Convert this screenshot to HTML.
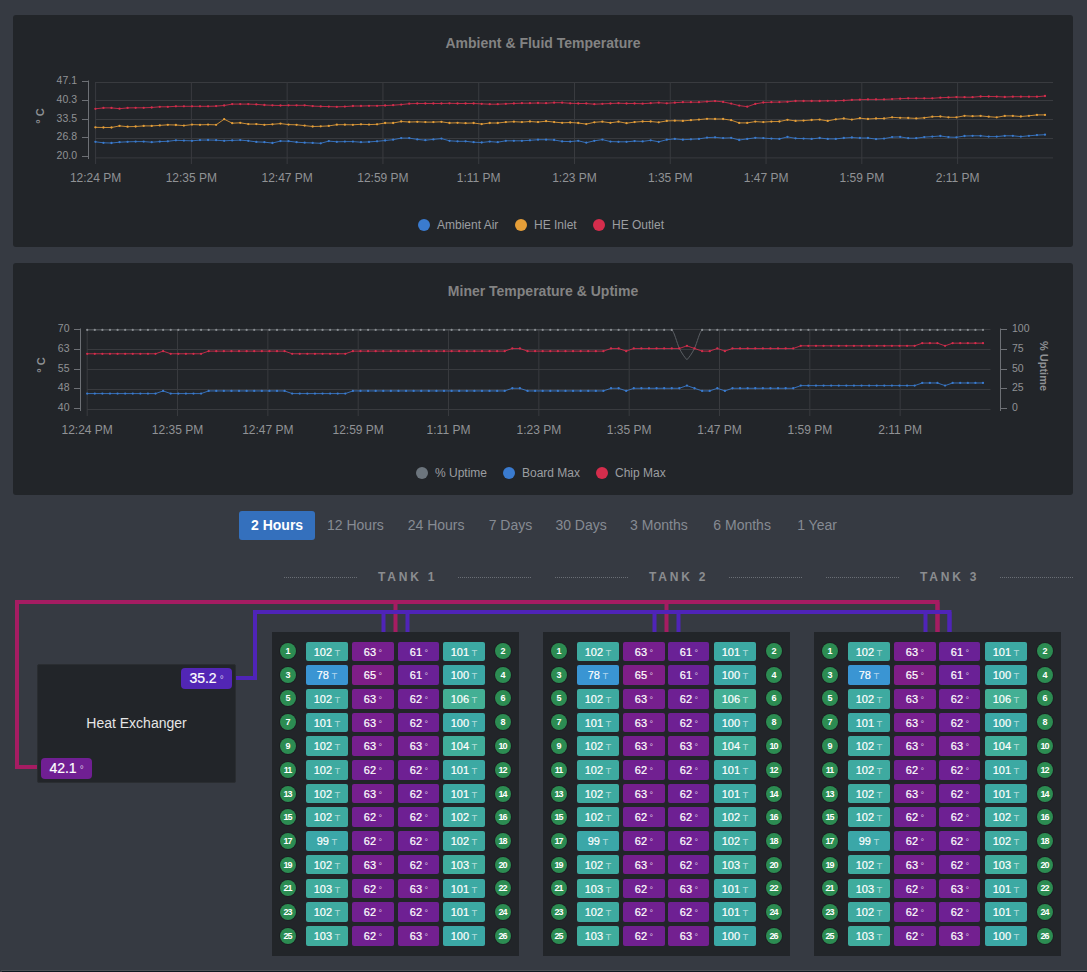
<!DOCTYPE html><html><head><meta charset="utf-8"><style>
html,body{margin:0;padding:0;}
body{width:1087px;height:972px;overflow:hidden;background:#363a42;position:relative;font-family:"Liberation Sans",sans-serif;}
.panel{position:absolute;background:#222529;border-radius:3px;}
.abs{position:absolute;}
svg text{font-family:"Liberation Sans",sans-serif;}
.title{position:absolute;left:13px;width:1060px;text-align:center;font-size:14px;font-weight:bold;color:#838383;}
.leg{position:absolute;font-size:12px;color:#9c9ea1;white-space:nowrap;}
.dot{position:absolute;width:12px;height:12px;border-radius:50%;}
.btn{position:absolute;top:511px;height:29px;line-height:29px;font-size:14px;color:#868b93;white-space:nowrap;}
.btn.act{background:#3470bd;color:#fff;font-weight:bold;border-radius:3px;padding:0 12px;}
.hdr{position:absolute;top:570px;font-size:12px;font-weight:bold;letter-spacing:2.8px;color:#8b8d90;white-space:nowrap;}
.dots{position:absolute;top:577px;height:0;border-top:1px dotted #6a6e75;}
.tank{position:absolute;top:632px;width:247px;height:324px;background:#222529;}
.c{position:absolute;width:42px;height:20px;border-radius:2px;}
.ct{position:absolute;width:42px;height:20px;color:#fff;font-size:11px;-webkit-text-stroke:0.2px #fff;line-height:20px;text-align:center;white-space:nowrap;}
.ct .s{font-size:9.5px;color:rgba(255,255,255,0.6);-webkit-text-stroke:0;}
.ct .d{font-size:9px;color:rgba(255,255,255,0.75);-webkit-text-stroke:0;}
.n{position:absolute;width:16px;height:16px;border-radius:50%;background:#2c8c52;color:#fff;font-size:9px;font-weight:bold;line-height:16px;text-align:center;letter-spacing:-1.2px;text-indent:-1.2px;box-shadow:0 0 0 1px #1c1f22;}
.badge{position:absolute;height:21px;line-height:21px;border-radius:4px;color:#fff;font-size:14px;text-align:center;-webkit-text-stroke:0.2px #fff;}
.badge .d{font-size:10px;color:rgba(255,255,255,0.7);margin-left:3px;-webkit-text-stroke:0;}
</style></head><body>

<div class="panel" style="left:13px;top:15px;width:1060px;height:232px;"></div>
<div class="panel" style="left:13px;top:263px;width:1060px;height:232px;"></div>
<div class="title" style="top:35px;">Ambient &amp; Fluid Temperature</div>
<div class="title" style="top:283px;">Miner Temperature &amp; Uptime</div>
<svg class="abs" style="left:0;top:0" width="1087" height="972"><line x1="95" x2="1053" y1="82.5" y2="82.5" stroke="#393b3f" stroke-width="1"/><line x1="95" x2="1053" y1="100.5" y2="100.5" stroke="#393b3f" stroke-width="1"/><line x1="95" x2="1053" y1="119.5" y2="119.5" stroke="#393b3f" stroke-width="1"/><line x1="95" x2="1053" y1="138.5" y2="138.5" stroke="#393b3f" stroke-width="1"/><line x1="95" x2="1053" y1="157.9" y2="157.9" stroke="#393b3f" stroke-width="1"/><line x1="95.60" x2="95.60" y1="82" y2="164" stroke="#393b3f" stroke-width="1"/><line x1="191.38" x2="191.38" y1="82" y2="164" stroke="#393b3f" stroke-width="1"/><line x1="287.16" x2="287.16" y1="82" y2="164" stroke="#393b3f" stroke-width="1"/><line x1="382.94" x2="382.94" y1="82" y2="164" stroke="#393b3f" stroke-width="1"/><line x1="478.72" x2="478.72" y1="82" y2="164" stroke="#393b3f" stroke-width="1"/><line x1="574.50" x2="574.50" y1="82" y2="164" stroke="#393b3f" stroke-width="1"/><line x1="670.28" x2="670.28" y1="82" y2="164" stroke="#393b3f" stroke-width="1"/><line x1="766.06" x2="766.06" y1="82" y2="164" stroke="#393b3f" stroke-width="1"/><line x1="861.84" x2="861.84" y1="82" y2="164" stroke="#393b3f" stroke-width="1"/><line x1="957.62" x2="957.62" y1="82" y2="164" stroke="#393b3f" stroke-width="1"/><line x1="88.5" x2="88.5" y1="80.5" y2="159" stroke="#6d7075" stroke-width="1"/><line x1="82" x2="88.5" y1="81.5" y2="81.5" stroke="#6d7075" stroke-width="1"/><text x="77" y="83.5" font-size="10.5" fill="#909295" text-anchor="end">47.1</text><line x1="82" x2="88.5" y1="100.5" y2="100.5" stroke="#6d7075" stroke-width="1"/><text x="77" y="102.5" font-size="10.5" fill="#909295" text-anchor="end">40.3</text><line x1="82" x2="88.5" y1="119.5" y2="119.5" stroke="#6d7075" stroke-width="1"/><text x="77" y="121.5" font-size="10.5" fill="#909295" text-anchor="end">33.5</text><line x1="82" x2="88.5" y1="137.5" y2="137.5" stroke="#6d7075" stroke-width="1"/><text x="77" y="139.5" font-size="10.5" fill="#909295" text-anchor="end">26.8</text><line x1="82" x2="88.5" y1="156.5" y2="156.5" stroke="#6d7075" stroke-width="1"/><text x="77" y="158.5" font-size="10.5" fill="#909295" text-anchor="end">20.0</text><text x="95.6" y="182" font-size="12" fill="#909295" text-anchor="middle">12:24 PM</text><text x="191.38" y="182" font-size="12" fill="#909295" text-anchor="middle">12:35 PM</text><text x="287.15999999999997" y="182" font-size="12" fill="#909295" text-anchor="middle">12:47 PM</text><text x="382.94000000000005" y="182" font-size="12" fill="#909295" text-anchor="middle">12:59 PM</text><text x="478.72" y="182" font-size="12" fill="#909295" text-anchor="middle">1:11 PM</text><text x="574.5" y="182" font-size="12" fill="#909295" text-anchor="middle">1:23 PM</text><text x="670.2800000000001" y="182" font-size="12" fill="#909295" text-anchor="middle">1:35 PM</text><text x="766.0600000000001" y="182" font-size="12" fill="#909295" text-anchor="middle">1:47 PM</text><text x="861.84" y="182" font-size="12" fill="#909295" text-anchor="middle">1:59 PM</text><text x="957.62" y="182" font-size="12" fill="#909295" text-anchor="middle">2:11 PM</text><text transform="translate(44,116) rotate(-90)" font-size="11" font-weight="bold" fill="#909295" text-anchor="middle">° C</text><g fill="#3a7bcf"><polyline fill="none" stroke="#3a7bcf" stroke-width="1.0" stroke-opacity="0.85" points="95.40,141.80 103.45,142.80 111.49,143.00 119.54,142.20 127.59,141.80 135.64,141.60 143.68,141.60 151.73,142.20 159.78,141.60 167.83,141.30 175.87,140.30 183.92,140.60 191.97,140.80 200.02,140.10 208.06,140.00 216.11,140.20 224.16,140.80 232.21,140.40 240.25,140.10 248.30,140.80 256.35,141.90 264.40,142.20 272.44,143.00 280.49,141.10 288.54,141.20 296.59,142.20 304.63,142.70 312.68,142.90 320.73,143.30 328.78,141.10 336.82,141.80 344.87,141.60 352.92,141.60 360.97,142.20 369.01,141.90 377.06,141.30 385.11,140.50 393.16,139.70 401.20,138.10 409.25,138.10 417.30,139.40 425.35,140.20 433.39,139.40 441.44,138.60 449.49,140.80 457.54,141.30 465.58,141.30 473.63,142.20 481.68,142.50 489.73,141.60 497.77,142.20 505.82,140.80 513.87,140.80 521.92,140.80 529.96,140.30 538.01,139.70 546.06,139.70 554.11,140.00 562.15,141.40 570.20,141.60 578.25,140.80 586.29,142.70 594.34,140.80 602.39,139.60 610.44,141.60 618.48,141.80 626.53,141.80 634.58,141.10 642.63,141.40 650.67,140.30 658.72,141.80 666.77,139.70 674.82,138.90 682.86,139.70 690.91,139.30 698.96,138.90 707.01,137.60 715.05,137.30 723.10,138.10 731.15,137.80 739.20,140.00 747.24,138.90 755.29,137.80 763.34,138.10 771.39,138.60 779.43,138.90 787.48,136.90 795.53,138.35 803.58,138.60 811.62,138.90 819.67,138.00 827.72,138.90 835.77,138.90 843.81,138.00 851.86,137.50 859.91,138.00 867.96,138.00 876.00,139.10 884.05,138.60 892.10,137.10 900.15,136.90 908.19,138.20 916.24,138.20 924.29,137.10 932.34,136.60 940.38,136.00 948.43,137.10 956.48,137.30 964.53,136.00 972.57,135.80 980.62,135.80 988.67,136.60 996.72,136.60 1004.76,135.80 1012.81,135.80 1020.86,136.60 1028.91,135.80 1036.95,135.10 1045.00,134.70"/><circle cx="95.40" cy="141.80" r="1.15"/><circle cx="103.45" cy="142.80" r="1.15"/><circle cx="111.49" cy="143.00" r="1.15"/><circle cx="119.54" cy="142.20" r="1.15"/><circle cx="127.59" cy="141.80" r="1.15"/><circle cx="135.64" cy="141.60" r="1.15"/><circle cx="143.68" cy="141.60" r="1.15"/><circle cx="151.73" cy="142.20" r="1.15"/><circle cx="159.78" cy="141.60" r="1.15"/><circle cx="167.83" cy="141.30" r="1.15"/><circle cx="175.87" cy="140.30" r="1.15"/><circle cx="183.92" cy="140.60" r="1.15"/><circle cx="191.97" cy="140.80" r="1.15"/><circle cx="200.02" cy="140.10" r="1.15"/><circle cx="208.06" cy="140.00" r="1.15"/><circle cx="216.11" cy="140.20" r="1.15"/><circle cx="224.16" cy="140.80" r="1.15"/><circle cx="232.21" cy="140.40" r="1.15"/><circle cx="240.25" cy="140.10" r="1.15"/><circle cx="248.30" cy="140.80" r="1.15"/><circle cx="256.35" cy="141.90" r="1.15"/><circle cx="264.40" cy="142.20" r="1.15"/><circle cx="272.44" cy="143.00" r="1.15"/><circle cx="280.49" cy="141.10" r="1.15"/><circle cx="288.54" cy="141.20" r="1.15"/><circle cx="296.59" cy="142.20" r="1.15"/><circle cx="304.63" cy="142.70" r="1.15"/><circle cx="312.68" cy="142.90" r="1.15"/><circle cx="320.73" cy="143.30" r="1.15"/><circle cx="328.78" cy="141.10" r="1.15"/><circle cx="336.82" cy="141.80" r="1.15"/><circle cx="344.87" cy="141.60" r="1.15"/><circle cx="352.92" cy="141.60" r="1.15"/><circle cx="360.97" cy="142.20" r="1.15"/><circle cx="369.01" cy="141.90" r="1.15"/><circle cx="377.06" cy="141.30" r="1.15"/><circle cx="385.11" cy="140.50" r="1.15"/><circle cx="393.16" cy="139.70" r="1.15"/><circle cx="401.20" cy="138.10" r="1.15"/><circle cx="409.25" cy="138.10" r="1.15"/><circle cx="417.30" cy="139.40" r="1.15"/><circle cx="425.35" cy="140.20" r="1.15"/><circle cx="433.39" cy="139.40" r="1.15"/><circle cx="441.44" cy="138.60" r="1.15"/><circle cx="449.49" cy="140.80" r="1.15"/><circle cx="457.54" cy="141.30" r="1.15"/><circle cx="465.58" cy="141.30" r="1.15"/><circle cx="473.63" cy="142.20" r="1.15"/><circle cx="481.68" cy="142.50" r="1.15"/><circle cx="489.73" cy="141.60" r="1.15"/><circle cx="497.77" cy="142.20" r="1.15"/><circle cx="505.82" cy="140.80" r="1.15"/><circle cx="513.87" cy="140.80" r="1.15"/><circle cx="521.92" cy="140.80" r="1.15"/><circle cx="529.96" cy="140.30" r="1.15"/><circle cx="538.01" cy="139.70" r="1.15"/><circle cx="546.06" cy="139.70" r="1.15"/><circle cx="554.11" cy="140.00" r="1.15"/><circle cx="562.15" cy="141.40" r="1.15"/><circle cx="570.20" cy="141.60" r="1.15"/><circle cx="578.25" cy="140.80" r="1.15"/><circle cx="586.29" cy="142.70" r="1.15"/><circle cx="594.34" cy="140.80" r="1.15"/><circle cx="602.39" cy="139.60" r="1.15"/><circle cx="610.44" cy="141.60" r="1.15"/><circle cx="618.48" cy="141.80" r="1.15"/><circle cx="626.53" cy="141.80" r="1.15"/><circle cx="634.58" cy="141.10" r="1.15"/><circle cx="642.63" cy="141.40" r="1.15"/><circle cx="650.67" cy="140.30" r="1.15"/><circle cx="658.72" cy="141.80" r="1.15"/><circle cx="666.77" cy="139.70" r="1.15"/><circle cx="674.82" cy="138.90" r="1.15"/><circle cx="682.86" cy="139.70" r="1.15"/><circle cx="690.91" cy="139.30" r="1.15"/><circle cx="698.96" cy="138.90" r="1.15"/><circle cx="707.01" cy="137.60" r="1.15"/><circle cx="715.05" cy="137.30" r="1.15"/><circle cx="723.10" cy="138.10" r="1.15"/><circle cx="731.15" cy="137.80" r="1.15"/><circle cx="739.20" cy="140.00" r="1.15"/><circle cx="747.24" cy="138.90" r="1.15"/><circle cx="755.29" cy="137.80" r="1.15"/><circle cx="763.34" cy="138.10" r="1.15"/><circle cx="771.39" cy="138.60" r="1.15"/><circle cx="779.43" cy="138.90" r="1.15"/><circle cx="787.48" cy="136.90" r="1.15"/><circle cx="795.53" cy="138.35" r="1.15"/><circle cx="803.58" cy="138.60" r="1.15"/><circle cx="811.62" cy="138.90" r="1.15"/><circle cx="819.67" cy="138.00" r="1.15"/><circle cx="827.72" cy="138.90" r="1.15"/><circle cx="835.77" cy="138.90" r="1.15"/><circle cx="843.81" cy="138.00" r="1.15"/><circle cx="851.86" cy="137.50" r="1.15"/><circle cx="859.91" cy="138.00" r="1.15"/><circle cx="867.96" cy="138.00" r="1.15"/><circle cx="876.00" cy="139.10" r="1.15"/><circle cx="884.05" cy="138.60" r="1.15"/><circle cx="892.10" cy="137.10" r="1.15"/><circle cx="900.15" cy="136.90" r="1.15"/><circle cx="908.19" cy="138.20" r="1.15"/><circle cx="916.24" cy="138.20" r="1.15"/><circle cx="924.29" cy="137.10" r="1.15"/><circle cx="932.34" cy="136.60" r="1.15"/><circle cx="940.38" cy="136.00" r="1.15"/><circle cx="948.43" cy="137.10" r="1.15"/><circle cx="956.48" cy="137.30" r="1.15"/><circle cx="964.53" cy="136.00" r="1.15"/><circle cx="972.57" cy="135.80" r="1.15"/><circle cx="980.62" cy="135.80" r="1.15"/><circle cx="988.67" cy="136.60" r="1.15"/><circle cx="996.72" cy="136.60" r="1.15"/><circle cx="1004.76" cy="135.80" r="1.15"/><circle cx="1012.81" cy="135.80" r="1.15"/><circle cx="1020.86" cy="136.60" r="1.15"/><circle cx="1028.91" cy="135.80" r="1.15"/><circle cx="1036.95" cy="135.10" r="1.15"/><circle cx="1045.00" cy="134.70" r="1.15"/></g><g fill="#e59e38"><polyline fill="none" stroke="#e59e38" stroke-width="1.0" stroke-opacity="0.85" points="95.40,127.30 103.45,127.50 111.49,127.50 119.54,125.90 127.59,126.70 135.64,126.50 143.68,125.90 151.73,125.90 159.78,125.40 167.83,124.80 175.87,125.00 183.92,125.60 191.97,124.60 200.02,124.80 208.06,124.60 216.11,124.80 224.16,119.20 232.21,123.20 240.25,122.80 248.30,124.10 256.35,124.10 264.40,124.80 272.44,124.30 280.49,123.60 288.54,124.60 296.59,124.80 304.63,125.60 312.68,126.50 320.73,126.30 328.78,125.90 336.82,124.70 344.87,124.70 352.92,124.80 360.97,124.30 369.01,124.60 377.06,124.30 385.11,123.00 393.16,123.00 401.20,121.50 409.25,122.00 417.30,121.80 425.35,122.10 433.39,122.10 441.44,121.80 449.49,123.00 457.54,122.80 465.58,123.20 473.63,123.00 481.68,124.10 489.73,123.00 497.77,123.00 505.82,122.10 513.87,121.70 521.92,122.10 529.96,121.50 538.01,122.10 546.06,121.20 554.11,122.10 562.15,122.80 570.20,122.50 578.25,123.00 586.29,124.10 594.34,122.30 602.39,121.70 610.44,122.80 618.48,121.70 626.53,123.20 634.58,122.10 642.63,121.50 650.67,121.50 658.72,122.30 666.77,120.90 674.82,120.70 682.86,120.90 690.91,120.20 698.96,119.60 707.01,118.80 715.05,119.00 723.10,119.00 731.15,120.20 739.20,122.90 747.24,122.90 755.29,121.60 763.34,122.10 771.39,121.60 779.43,121.50 787.48,119.80 795.53,120.90 803.58,120.60 811.62,120.00 819.67,119.60 827.72,120.90 835.77,119.30 843.81,118.50 851.86,119.60 859.91,118.20 867.96,119.00 876.00,118.50 884.05,118.50 892.10,117.30 900.15,117.80 908.19,118.00 916.24,118.40 924.29,117.80 932.34,116.70 940.38,116.50 948.43,117.30 956.48,117.30 964.53,115.80 972.57,116.20 980.62,115.90 988.67,116.70 996.72,117.30 1004.76,115.90 1012.81,115.90 1020.86,116.50 1028.91,115.80 1036.95,114.90 1045.00,114.90"/><circle cx="95.40" cy="127.30" r="1.15"/><circle cx="103.45" cy="127.50" r="1.15"/><circle cx="111.49" cy="127.50" r="1.15"/><circle cx="119.54" cy="125.90" r="1.15"/><circle cx="127.59" cy="126.70" r="1.15"/><circle cx="135.64" cy="126.50" r="1.15"/><circle cx="143.68" cy="125.90" r="1.15"/><circle cx="151.73" cy="125.90" r="1.15"/><circle cx="159.78" cy="125.40" r="1.15"/><circle cx="167.83" cy="124.80" r="1.15"/><circle cx="175.87" cy="125.00" r="1.15"/><circle cx="183.92" cy="125.60" r="1.15"/><circle cx="191.97" cy="124.60" r="1.15"/><circle cx="200.02" cy="124.80" r="1.15"/><circle cx="208.06" cy="124.60" r="1.15"/><circle cx="216.11" cy="124.80" r="1.15"/><circle cx="224.16" cy="119.20" r="1.15"/><circle cx="232.21" cy="123.20" r="1.15"/><circle cx="240.25" cy="122.80" r="1.15"/><circle cx="248.30" cy="124.10" r="1.15"/><circle cx="256.35" cy="124.10" r="1.15"/><circle cx="264.40" cy="124.80" r="1.15"/><circle cx="272.44" cy="124.30" r="1.15"/><circle cx="280.49" cy="123.60" r="1.15"/><circle cx="288.54" cy="124.60" r="1.15"/><circle cx="296.59" cy="124.80" r="1.15"/><circle cx="304.63" cy="125.60" r="1.15"/><circle cx="312.68" cy="126.50" r="1.15"/><circle cx="320.73" cy="126.30" r="1.15"/><circle cx="328.78" cy="125.90" r="1.15"/><circle cx="336.82" cy="124.70" r="1.15"/><circle cx="344.87" cy="124.70" r="1.15"/><circle cx="352.92" cy="124.80" r="1.15"/><circle cx="360.97" cy="124.30" r="1.15"/><circle cx="369.01" cy="124.60" r="1.15"/><circle cx="377.06" cy="124.30" r="1.15"/><circle cx="385.11" cy="123.00" r="1.15"/><circle cx="393.16" cy="123.00" r="1.15"/><circle cx="401.20" cy="121.50" r="1.15"/><circle cx="409.25" cy="122.00" r="1.15"/><circle cx="417.30" cy="121.80" r="1.15"/><circle cx="425.35" cy="122.10" r="1.15"/><circle cx="433.39" cy="122.10" r="1.15"/><circle cx="441.44" cy="121.80" r="1.15"/><circle cx="449.49" cy="123.00" r="1.15"/><circle cx="457.54" cy="122.80" r="1.15"/><circle cx="465.58" cy="123.20" r="1.15"/><circle cx="473.63" cy="123.00" r="1.15"/><circle cx="481.68" cy="124.10" r="1.15"/><circle cx="489.73" cy="123.00" r="1.15"/><circle cx="497.77" cy="123.00" r="1.15"/><circle cx="505.82" cy="122.10" r="1.15"/><circle cx="513.87" cy="121.70" r="1.15"/><circle cx="521.92" cy="122.10" r="1.15"/><circle cx="529.96" cy="121.50" r="1.15"/><circle cx="538.01" cy="122.10" r="1.15"/><circle cx="546.06" cy="121.20" r="1.15"/><circle cx="554.11" cy="122.10" r="1.15"/><circle cx="562.15" cy="122.80" r="1.15"/><circle cx="570.20" cy="122.50" r="1.15"/><circle cx="578.25" cy="123.00" r="1.15"/><circle cx="586.29" cy="124.10" r="1.15"/><circle cx="594.34" cy="122.30" r="1.15"/><circle cx="602.39" cy="121.70" r="1.15"/><circle cx="610.44" cy="122.80" r="1.15"/><circle cx="618.48" cy="121.70" r="1.15"/><circle cx="626.53" cy="123.20" r="1.15"/><circle cx="634.58" cy="122.10" r="1.15"/><circle cx="642.63" cy="121.50" r="1.15"/><circle cx="650.67" cy="121.50" r="1.15"/><circle cx="658.72" cy="122.30" r="1.15"/><circle cx="666.77" cy="120.90" r="1.15"/><circle cx="674.82" cy="120.70" r="1.15"/><circle cx="682.86" cy="120.90" r="1.15"/><circle cx="690.91" cy="120.20" r="1.15"/><circle cx="698.96" cy="119.60" r="1.15"/><circle cx="707.01" cy="118.80" r="1.15"/><circle cx="715.05" cy="119.00" r="1.15"/><circle cx="723.10" cy="119.00" r="1.15"/><circle cx="731.15" cy="120.20" r="1.15"/><circle cx="739.20" cy="122.90" r="1.15"/><circle cx="747.24" cy="122.90" r="1.15"/><circle cx="755.29" cy="121.60" r="1.15"/><circle cx="763.34" cy="122.10" r="1.15"/><circle cx="771.39" cy="121.60" r="1.15"/><circle cx="779.43" cy="121.50" r="1.15"/><circle cx="787.48" cy="119.80" r="1.15"/><circle cx="795.53" cy="120.90" r="1.15"/><circle cx="803.58" cy="120.60" r="1.15"/><circle cx="811.62" cy="120.00" r="1.15"/><circle cx="819.67" cy="119.60" r="1.15"/><circle cx="827.72" cy="120.90" r="1.15"/><circle cx="835.77" cy="119.30" r="1.15"/><circle cx="843.81" cy="118.50" r="1.15"/><circle cx="851.86" cy="119.60" r="1.15"/><circle cx="859.91" cy="118.20" r="1.15"/><circle cx="867.96" cy="119.00" r="1.15"/><circle cx="876.00" cy="118.50" r="1.15"/><circle cx="884.05" cy="118.50" r="1.15"/><circle cx="892.10" cy="117.30" r="1.15"/><circle cx="900.15" cy="117.80" r="1.15"/><circle cx="908.19" cy="118.00" r="1.15"/><circle cx="916.24" cy="118.40" r="1.15"/><circle cx="924.29" cy="117.80" r="1.15"/><circle cx="932.34" cy="116.70" r="1.15"/><circle cx="940.38" cy="116.50" r="1.15"/><circle cx="948.43" cy="117.30" r="1.15"/><circle cx="956.48" cy="117.30" r="1.15"/><circle cx="964.53" cy="115.80" r="1.15"/><circle cx="972.57" cy="116.20" r="1.15"/><circle cx="980.62" cy="115.90" r="1.15"/><circle cx="988.67" cy="116.70" r="1.15"/><circle cx="996.72" cy="117.30" r="1.15"/><circle cx="1004.76" cy="115.90" r="1.15"/><circle cx="1012.81" cy="115.90" r="1.15"/><circle cx="1020.86" cy="116.50" r="1.15"/><circle cx="1028.91" cy="115.80" r="1.15"/><circle cx="1036.95" cy="114.90" r="1.15"/><circle cx="1045.00" cy="114.90" r="1.15"/></g><g fill="#d52d4c"><polyline fill="none" stroke="#d52d4c" stroke-width="1.0" stroke-opacity="0.85" points="95.40,108.80 103.45,107.90 111.49,107.90 119.54,108.70 127.59,107.90 135.64,107.80 143.68,107.80 151.73,107.50 159.78,106.80 167.83,106.80 175.87,106.30 183.92,106.30 191.97,106.30 200.02,106.30 208.06,106.30 216.11,106.10 224.16,105.50 232.21,104.10 240.25,104.10 248.30,104.10 256.35,104.40 264.40,105.00 272.44,105.30 280.49,105.50 288.54,105.30 296.59,105.30 304.63,105.30 312.68,106.10 320.73,106.40 328.78,106.60 336.82,106.80 344.87,106.60 352.92,106.00 360.97,106.00 369.01,105.80 377.06,105.80 385.11,105.50 393.16,105.20 401.20,104.60 409.25,103.70 417.30,103.50 425.35,103.50 433.39,103.50 441.44,103.50 449.49,103.30 457.54,103.50 465.58,103.50 473.63,103.50 481.68,103.85 489.73,104.20 497.77,104.20 505.82,103.85 513.87,103.50 521.92,103.20 529.96,103.20 538.01,103.00 546.06,103.20 554.11,102.70 562.15,102.70 570.20,103.30 578.25,103.50 586.29,103.50 594.34,104.20 602.39,103.85 610.44,103.50 618.48,103.20 626.53,103.50 634.58,103.50 642.63,103.70 650.67,103.20 658.72,102.70 666.77,103.30 674.82,102.70 682.86,102.20 690.91,102.20 698.96,102.20 707.01,101.60 715.05,101.05 723.10,101.90 731.15,103.60 739.20,105.60 747.24,106.70 755.29,103.90 763.34,102.50 771.39,102.20 779.43,102.10 787.48,101.80 795.53,101.00 803.58,101.00 811.62,101.00 819.67,101.00 827.72,100.80 835.77,100.80 843.81,100.50 851.86,99.90 859.91,99.70 867.96,99.40 876.00,99.40 884.05,99.40 892.10,99.05 900.15,98.70 908.19,98.30 916.24,98.30 924.29,98.30 932.34,98.30 940.38,97.70 948.43,97.40 956.48,97.05 964.53,97.20 972.57,97.20 980.62,96.50 988.67,96.50 996.72,96.60 1004.76,97.00 1012.81,96.70 1020.86,96.70 1028.91,96.70 1036.95,96.70 1045.00,96.00"/><circle cx="95.40" cy="108.80" r="1.15"/><circle cx="103.45" cy="107.90" r="1.15"/><circle cx="111.49" cy="107.90" r="1.15"/><circle cx="119.54" cy="108.70" r="1.15"/><circle cx="127.59" cy="107.90" r="1.15"/><circle cx="135.64" cy="107.80" r="1.15"/><circle cx="143.68" cy="107.80" r="1.15"/><circle cx="151.73" cy="107.50" r="1.15"/><circle cx="159.78" cy="106.80" r="1.15"/><circle cx="167.83" cy="106.80" r="1.15"/><circle cx="175.87" cy="106.30" r="1.15"/><circle cx="183.92" cy="106.30" r="1.15"/><circle cx="191.97" cy="106.30" r="1.15"/><circle cx="200.02" cy="106.30" r="1.15"/><circle cx="208.06" cy="106.30" r="1.15"/><circle cx="216.11" cy="106.10" r="1.15"/><circle cx="224.16" cy="105.50" r="1.15"/><circle cx="232.21" cy="104.10" r="1.15"/><circle cx="240.25" cy="104.10" r="1.15"/><circle cx="248.30" cy="104.10" r="1.15"/><circle cx="256.35" cy="104.40" r="1.15"/><circle cx="264.40" cy="105.00" r="1.15"/><circle cx="272.44" cy="105.30" r="1.15"/><circle cx="280.49" cy="105.50" r="1.15"/><circle cx="288.54" cy="105.30" r="1.15"/><circle cx="296.59" cy="105.30" r="1.15"/><circle cx="304.63" cy="105.30" r="1.15"/><circle cx="312.68" cy="106.10" r="1.15"/><circle cx="320.73" cy="106.40" r="1.15"/><circle cx="328.78" cy="106.60" r="1.15"/><circle cx="336.82" cy="106.80" r="1.15"/><circle cx="344.87" cy="106.60" r="1.15"/><circle cx="352.92" cy="106.00" r="1.15"/><circle cx="360.97" cy="106.00" r="1.15"/><circle cx="369.01" cy="105.80" r="1.15"/><circle cx="377.06" cy="105.80" r="1.15"/><circle cx="385.11" cy="105.50" r="1.15"/><circle cx="393.16" cy="105.20" r="1.15"/><circle cx="401.20" cy="104.60" r="1.15"/><circle cx="409.25" cy="103.70" r="1.15"/><circle cx="417.30" cy="103.50" r="1.15"/><circle cx="425.35" cy="103.50" r="1.15"/><circle cx="433.39" cy="103.50" r="1.15"/><circle cx="441.44" cy="103.50" r="1.15"/><circle cx="449.49" cy="103.30" r="1.15"/><circle cx="457.54" cy="103.50" r="1.15"/><circle cx="465.58" cy="103.50" r="1.15"/><circle cx="473.63" cy="103.50" r="1.15"/><circle cx="481.68" cy="103.85" r="1.15"/><circle cx="489.73" cy="104.20" r="1.15"/><circle cx="497.77" cy="104.20" r="1.15"/><circle cx="505.82" cy="103.85" r="1.15"/><circle cx="513.87" cy="103.50" r="1.15"/><circle cx="521.92" cy="103.20" r="1.15"/><circle cx="529.96" cy="103.20" r="1.15"/><circle cx="538.01" cy="103.00" r="1.15"/><circle cx="546.06" cy="103.20" r="1.15"/><circle cx="554.11" cy="102.70" r="1.15"/><circle cx="562.15" cy="102.70" r="1.15"/><circle cx="570.20" cy="103.30" r="1.15"/><circle cx="578.25" cy="103.50" r="1.15"/><circle cx="586.29" cy="103.50" r="1.15"/><circle cx="594.34" cy="104.20" r="1.15"/><circle cx="602.39" cy="103.85" r="1.15"/><circle cx="610.44" cy="103.50" r="1.15"/><circle cx="618.48" cy="103.20" r="1.15"/><circle cx="626.53" cy="103.50" r="1.15"/><circle cx="634.58" cy="103.50" r="1.15"/><circle cx="642.63" cy="103.70" r="1.15"/><circle cx="650.67" cy="103.20" r="1.15"/><circle cx="658.72" cy="102.70" r="1.15"/><circle cx="666.77" cy="103.30" r="1.15"/><circle cx="674.82" cy="102.70" r="1.15"/><circle cx="682.86" cy="102.20" r="1.15"/><circle cx="690.91" cy="102.20" r="1.15"/><circle cx="698.96" cy="102.20" r="1.15"/><circle cx="707.01" cy="101.60" r="1.15"/><circle cx="715.05" cy="101.05" r="1.15"/><circle cx="723.10" cy="101.90" r="1.15"/><circle cx="731.15" cy="103.60" r="1.15"/><circle cx="739.20" cy="105.60" r="1.15"/><circle cx="747.24" cy="106.70" r="1.15"/><circle cx="755.29" cy="103.90" r="1.15"/><circle cx="763.34" cy="102.50" r="1.15"/><circle cx="771.39" cy="102.20" r="1.15"/><circle cx="779.43" cy="102.10" r="1.15"/><circle cx="787.48" cy="101.80" r="1.15"/><circle cx="795.53" cy="101.00" r="1.15"/><circle cx="803.58" cy="101.00" r="1.15"/><circle cx="811.62" cy="101.00" r="1.15"/><circle cx="819.67" cy="101.00" r="1.15"/><circle cx="827.72" cy="100.80" r="1.15"/><circle cx="835.77" cy="100.80" r="1.15"/><circle cx="843.81" cy="100.50" r="1.15"/><circle cx="851.86" cy="99.90" r="1.15"/><circle cx="859.91" cy="99.70" r="1.15"/><circle cx="867.96" cy="99.40" r="1.15"/><circle cx="876.00" cy="99.40" r="1.15"/><circle cx="884.05" cy="99.40" r="1.15"/><circle cx="892.10" cy="99.05" r="1.15"/><circle cx="900.15" cy="98.70" r="1.15"/><circle cx="908.19" cy="98.30" r="1.15"/><circle cx="916.24" cy="98.30" r="1.15"/><circle cx="924.29" cy="98.30" r="1.15"/><circle cx="932.34" cy="98.30" r="1.15"/><circle cx="940.38" cy="97.70" r="1.15"/><circle cx="948.43" cy="97.40" r="1.15"/><circle cx="956.48" cy="97.05" r="1.15"/><circle cx="964.53" cy="97.20" r="1.15"/><circle cx="972.57" cy="97.20" r="1.15"/><circle cx="980.62" cy="96.50" r="1.15"/><circle cx="988.67" cy="96.50" r="1.15"/><circle cx="996.72" cy="96.60" r="1.15"/><circle cx="1004.76" cy="97.00" r="1.15"/><circle cx="1012.81" cy="96.70" r="1.15"/><circle cx="1020.86" cy="96.70" r="1.15"/><circle cx="1028.91" cy="96.70" r="1.15"/><circle cx="1036.95" cy="96.70" r="1.15"/><circle cx="1045.00" cy="96.00" r="1.15"/></g><line x1="87" x2="990.5" y1="329.5" y2="329.5" stroke="#393b3f" stroke-width="1"/><line x1="87" x2="990.5" y1="349.5" y2="349.5" stroke="#393b3f" stroke-width="1"/><line x1="87" x2="990.5" y1="369.5" y2="369.5" stroke="#393b3f" stroke-width="1"/><line x1="87" x2="990.5" y1="389.5" y2="389.5" stroke="#393b3f" stroke-width="1"/><line x1="87" x2="990.5" y1="409.5" y2="409.5" stroke="#393b3f" stroke-width="1"/><line x1="87.20" x2="87.20" y1="329" y2="416" stroke="#393b3f" stroke-width="1"/><line x1="177.53" x2="177.53" y1="329" y2="416" stroke="#393b3f" stroke-width="1"/><line x1="267.86" x2="267.86" y1="329" y2="416" stroke="#393b3f" stroke-width="1"/><line x1="358.19" x2="358.19" y1="329" y2="416" stroke="#393b3f" stroke-width="1"/><line x1="448.52" x2="448.52" y1="329" y2="416" stroke="#393b3f" stroke-width="1"/><line x1="538.85" x2="538.85" y1="329" y2="416" stroke="#393b3f" stroke-width="1"/><line x1="629.18" x2="629.18" y1="329" y2="416" stroke="#393b3f" stroke-width="1"/><line x1="719.51" x2="719.51" y1="329" y2="416" stroke="#393b3f" stroke-width="1"/><line x1="809.84" x2="809.84" y1="329" y2="416" stroke="#393b3f" stroke-width="1"/><line x1="900.17" x2="900.17" y1="329" y2="416" stroke="#393b3f" stroke-width="1"/><line x1="80.5" x2="80.5" y1="328.5" y2="411" stroke="#6d7075" stroke-width="1"/><line x1="1000.5" x2="1000.5" y1="328.5" y2="411" stroke="#6d7075" stroke-width="1"/><line x1="74" x2="80.5" y1="329.5" y2="329.5" stroke="#6d7075" stroke-width="1"/><line x1="1000.5" x2="1007" y1="329.5" y2="329.5" stroke="#6d7075" stroke-width="1"/><text x="69.5" y="331.5" font-size="10.5" fill="#909295" text-anchor="end">70</text><text x="1012" y="331.5" font-size="10.5" fill="#909295">100</text><line x1="74" x2="80.5" y1="349.5" y2="349.5" stroke="#6d7075" stroke-width="1"/><line x1="1000.5" x2="1007" y1="349.5" y2="349.5" stroke="#6d7075" stroke-width="1"/><text x="69.5" y="351.5" font-size="10.5" fill="#909295" text-anchor="end">63</text><text x="1012" y="351.5" font-size="10.5" fill="#909295">75</text><line x1="74" x2="80.5" y1="369.5" y2="369.5" stroke="#6d7075" stroke-width="1"/><line x1="1000.5" x2="1007" y1="369.5" y2="369.5" stroke="#6d7075" stroke-width="1"/><text x="69.5" y="371.5" font-size="10.5" fill="#909295" text-anchor="end">55</text><text x="1012" y="371.5" font-size="10.5" fill="#909295">50</text><line x1="74" x2="80.5" y1="388.5" y2="388.5" stroke="#6d7075" stroke-width="1"/><line x1="1000.5" x2="1007" y1="388.5" y2="388.5" stroke="#6d7075" stroke-width="1"/><text x="69.5" y="390.5" font-size="10.5" fill="#909295" text-anchor="end">48</text><text x="1012" y="390.5" font-size="10.5" fill="#909295">25</text><line x1="74" x2="80.5" y1="408.5" y2="408.5" stroke="#6d7075" stroke-width="1"/><line x1="1000.5" x2="1007" y1="408.5" y2="408.5" stroke="#6d7075" stroke-width="1"/><text x="69.5" y="410.5" font-size="10.5" fill="#909295" text-anchor="end">40</text><text x="1012" y="410.5" font-size="10.5" fill="#909295">0</text><text x="87.2" y="434" font-size="12" fill="#909295" text-anchor="middle">12:24 PM</text><text x="177.53" y="434" font-size="12" fill="#909295" text-anchor="middle">12:35 PM</text><text x="267.86" y="434" font-size="12" fill="#909295" text-anchor="middle">12:47 PM</text><text x="358.19" y="434" font-size="12" fill="#909295" text-anchor="middle">12:59 PM</text><text x="448.52" y="434" font-size="12" fill="#909295" text-anchor="middle">1:11 PM</text><text x="538.85" y="434" font-size="12" fill="#909295" text-anchor="middle">1:23 PM</text><text x="629.1800000000001" y="434" font-size="12" fill="#909295" text-anchor="middle">1:35 PM</text><text x="719.51" y="434" font-size="12" fill="#909295" text-anchor="middle">1:47 PM</text><text x="809.84" y="434" font-size="12" fill="#909295" text-anchor="middle">1:59 PM</text><text x="900.1700000000001" y="434" font-size="12" fill="#909295" text-anchor="middle">2:11 PM</text><text transform="translate(45,365) rotate(-90)" font-size="11" font-weight="bold" fill="#909295" text-anchor="middle">° C</text><text transform="translate(1040,366) rotate(90)" font-size="11" font-weight="bold" fill="#909295" text-anchor="middle">% Uptime</text><path d="M87.20,329.9 L671.75,329.9 C674.25,331.5 676.84,343.0 679.34,348.3 C681.84,353.5 684.93,357.7 686.93,359.7 C688.93,357.7 692.02,353.5 694.52,348.3 C697.02,343.0 699.61,331.5 702.11,329.9 L983.00,329.9" fill="none" stroke="#5a5e63" stroke-width="1"/><g fill="#8a8e93"><circle cx="87.20" cy="329.9" r="1.1"/><circle cx="94.79" cy="329.9" r="1.1"/><circle cx="102.38" cy="329.9" r="1.1"/><circle cx="109.97" cy="329.9" r="1.1"/><circle cx="117.57" cy="329.9" r="1.1"/><circle cx="125.16" cy="329.9" r="1.1"/><circle cx="132.75" cy="329.9" r="1.1"/><circle cx="140.34" cy="329.9" r="1.1"/><circle cx="147.93" cy="329.9" r="1.1"/><circle cx="155.52" cy="329.9" r="1.1"/><circle cx="163.12" cy="329.9" r="1.1"/><circle cx="170.71" cy="329.9" r="1.1"/><circle cx="178.30" cy="329.9" r="1.1"/><circle cx="185.89" cy="329.9" r="1.1"/><circle cx="193.48" cy="329.9" r="1.1"/><circle cx="201.07" cy="329.9" r="1.1"/><circle cx="208.66" cy="329.9" r="1.1"/><circle cx="216.26" cy="329.9" r="1.1"/><circle cx="223.85" cy="329.9" r="1.1"/><circle cx="231.44" cy="329.9" r="1.1"/><circle cx="239.03" cy="329.9" r="1.1"/><circle cx="246.62" cy="329.9" r="1.1"/><circle cx="254.21" cy="329.9" r="1.1"/><circle cx="261.81" cy="329.9" r="1.1"/><circle cx="269.40" cy="329.9" r="1.1"/><circle cx="276.99" cy="329.9" r="1.1"/><circle cx="284.58" cy="329.9" r="1.1"/><circle cx="292.17" cy="329.9" r="1.1"/><circle cx="299.76" cy="329.9" r="1.1"/><circle cx="307.35" cy="329.9" r="1.1"/><circle cx="314.95" cy="329.9" r="1.1"/><circle cx="322.54" cy="329.9" r="1.1"/><circle cx="330.13" cy="329.9" r="1.1"/><circle cx="337.72" cy="329.9" r="1.1"/><circle cx="345.31" cy="329.9" r="1.1"/><circle cx="352.90" cy="329.9" r="1.1"/><circle cx="360.49" cy="329.9" r="1.1"/><circle cx="368.09" cy="329.9" r="1.1"/><circle cx="375.68" cy="329.9" r="1.1"/><circle cx="383.27" cy="329.9" r="1.1"/><circle cx="390.86" cy="329.9" r="1.1"/><circle cx="398.45" cy="329.9" r="1.1"/><circle cx="406.04" cy="329.9" r="1.1"/><circle cx="413.64" cy="329.9" r="1.1"/><circle cx="421.23" cy="329.9" r="1.1"/><circle cx="428.82" cy="329.9" r="1.1"/><circle cx="436.41" cy="329.9" r="1.1"/><circle cx="444.00" cy="329.9" r="1.1"/><circle cx="451.59" cy="329.9" r="1.1"/><circle cx="459.18" cy="329.9" r="1.1"/><circle cx="466.78" cy="329.9" r="1.1"/><circle cx="474.37" cy="329.9" r="1.1"/><circle cx="481.96" cy="329.9" r="1.1"/><circle cx="489.55" cy="329.9" r="1.1"/><circle cx="497.14" cy="329.9" r="1.1"/><circle cx="504.73" cy="329.9" r="1.1"/><circle cx="512.33" cy="329.9" r="1.1"/><circle cx="519.92" cy="329.9" r="1.1"/><circle cx="527.51" cy="329.9" r="1.1"/><circle cx="535.10" cy="329.9" r="1.1"/><circle cx="542.69" cy="329.9" r="1.1"/><circle cx="550.28" cy="329.9" r="1.1"/><circle cx="557.87" cy="329.9" r="1.1"/><circle cx="565.47" cy="329.9" r="1.1"/><circle cx="573.06" cy="329.9" r="1.1"/><circle cx="580.65" cy="329.9" r="1.1"/><circle cx="588.24" cy="329.9" r="1.1"/><circle cx="595.83" cy="329.9" r="1.1"/><circle cx="603.42" cy="329.9" r="1.1"/><circle cx="611.02" cy="329.9" r="1.1"/><circle cx="618.61" cy="329.9" r="1.1"/><circle cx="626.20" cy="329.9" r="1.1"/><circle cx="633.79" cy="329.9" r="1.1"/><circle cx="641.38" cy="329.9" r="1.1"/><circle cx="648.97" cy="329.9" r="1.1"/><circle cx="656.56" cy="329.9" r="1.1"/><circle cx="664.16" cy="329.9" r="1.1"/><circle cx="671.75" cy="329.9" r="1.1"/><circle cx="702.11" cy="329.9" r="1.1"/><circle cx="709.71" cy="329.9" r="1.1"/><circle cx="717.30" cy="329.9" r="1.1"/><circle cx="724.89" cy="329.9" r="1.1"/><circle cx="732.48" cy="329.9" r="1.1"/><circle cx="740.07" cy="329.9" r="1.1"/><circle cx="747.66" cy="329.9" r="1.1"/><circle cx="755.25" cy="329.9" r="1.1"/><circle cx="762.85" cy="329.9" r="1.1"/><circle cx="770.44" cy="329.9" r="1.1"/><circle cx="778.03" cy="329.9" r="1.1"/><circle cx="785.62" cy="329.9" r="1.1"/><circle cx="793.21" cy="329.9" r="1.1"/><circle cx="800.80" cy="329.9" r="1.1"/><circle cx="808.39" cy="329.9" r="1.1"/><circle cx="815.99" cy="329.9" r="1.1"/><circle cx="823.58" cy="329.9" r="1.1"/><circle cx="831.17" cy="329.9" r="1.1"/><circle cx="838.76" cy="329.9" r="1.1"/><circle cx="846.35" cy="329.9" r="1.1"/><circle cx="853.94" cy="329.9" r="1.1"/><circle cx="861.54" cy="329.9" r="1.1"/><circle cx="869.13" cy="329.9" r="1.1"/><circle cx="876.72" cy="329.9" r="1.1"/><circle cx="884.31" cy="329.9" r="1.1"/><circle cx="891.90" cy="329.9" r="1.1"/><circle cx="899.49" cy="329.9" r="1.1"/><circle cx="907.08" cy="329.9" r="1.1"/><circle cx="914.68" cy="329.9" r="1.1"/><circle cx="922.27" cy="329.9" r="1.1"/><circle cx="929.86" cy="329.9" r="1.1"/><circle cx="937.45" cy="329.9" r="1.1"/><circle cx="945.04" cy="329.9" r="1.1"/><circle cx="952.63" cy="329.9" r="1.1"/><circle cx="960.23" cy="329.9" r="1.1"/><circle cx="967.82" cy="329.9" r="1.1"/><circle cx="975.41" cy="329.9" r="1.1"/><circle cx="983.00" cy="329.9" r="1.1"/></g><g fill="#3a7bcf"><polyline fill="none" stroke="#3a7bcf" stroke-width="1.0" stroke-opacity="0.85" points="87.20,393.58 94.79,393.58 102.38,393.58 109.97,393.58 117.57,393.58 125.16,393.58 132.75,393.58 140.34,393.58 147.93,393.58 155.52,393.58 163.12,390.93 170.71,393.58 178.30,393.58 185.89,393.58 193.48,393.58 201.07,393.58 208.66,390.93 216.26,390.93 223.85,390.93 231.44,390.93 239.03,390.93 246.62,390.93 254.21,390.93 261.81,390.93 269.40,390.93 276.99,390.93 284.58,390.93 292.17,393.58 299.76,393.58 307.35,393.58 314.95,393.58 322.54,393.58 330.13,393.58 337.72,393.58 345.31,393.58 352.90,390.93 360.49,390.93 368.09,390.93 375.68,390.93 383.27,390.93 390.86,390.93 398.45,390.93 406.04,390.93 413.64,390.93 421.23,390.93 428.82,390.93 436.41,390.93 444.00,390.93 451.59,390.93 459.18,390.93 466.78,390.93 474.37,390.93 481.96,390.93 489.55,390.93 497.14,390.93 504.73,390.93 512.33,388.27 519.92,388.27 527.51,390.93 535.10,390.93 542.69,390.93 550.28,390.93 557.87,390.93 565.47,390.93 573.06,390.93 580.65,390.93 588.24,390.93 595.83,390.93 603.42,390.93 611.02,388.27 618.61,388.27 626.20,390.93 633.79,388.27 641.38,388.27 648.97,388.27 656.56,388.27 664.16,388.27 671.75,388.27 679.34,388.27 686.93,385.62 694.52,388.27 702.11,390.93 709.71,390.93 717.30,388.27 724.89,390.93 732.48,388.27 740.07,388.27 747.66,388.27 755.25,388.27 762.85,388.27 770.44,388.27 778.03,388.27 785.62,388.27 793.21,388.27 800.80,385.62 808.39,385.62 815.99,385.62 823.58,385.62 831.17,385.62 838.76,385.62 846.35,385.62 853.94,385.62 861.54,385.62 869.13,385.62 876.72,385.62 884.31,385.62 891.90,385.62 899.49,385.62 907.08,385.62 914.68,385.62 922.27,382.97 929.86,382.97 937.45,382.97 945.04,385.62 952.63,382.97 960.23,382.97 967.82,382.97 975.41,382.97 983.00,382.97"/><circle cx="87.20" cy="393.58" r="1.15"/><circle cx="94.79" cy="393.58" r="1.15"/><circle cx="102.38" cy="393.58" r="1.15"/><circle cx="109.97" cy="393.58" r="1.15"/><circle cx="117.57" cy="393.58" r="1.15"/><circle cx="125.16" cy="393.58" r="1.15"/><circle cx="132.75" cy="393.58" r="1.15"/><circle cx="140.34" cy="393.58" r="1.15"/><circle cx="147.93" cy="393.58" r="1.15"/><circle cx="155.52" cy="393.58" r="1.15"/><circle cx="163.12" cy="390.93" r="1.15"/><circle cx="170.71" cy="393.58" r="1.15"/><circle cx="178.30" cy="393.58" r="1.15"/><circle cx="185.89" cy="393.58" r="1.15"/><circle cx="193.48" cy="393.58" r="1.15"/><circle cx="201.07" cy="393.58" r="1.15"/><circle cx="208.66" cy="390.93" r="1.15"/><circle cx="216.26" cy="390.93" r="1.15"/><circle cx="223.85" cy="390.93" r="1.15"/><circle cx="231.44" cy="390.93" r="1.15"/><circle cx="239.03" cy="390.93" r="1.15"/><circle cx="246.62" cy="390.93" r="1.15"/><circle cx="254.21" cy="390.93" r="1.15"/><circle cx="261.81" cy="390.93" r="1.15"/><circle cx="269.40" cy="390.93" r="1.15"/><circle cx="276.99" cy="390.93" r="1.15"/><circle cx="284.58" cy="390.93" r="1.15"/><circle cx="292.17" cy="393.58" r="1.15"/><circle cx="299.76" cy="393.58" r="1.15"/><circle cx="307.35" cy="393.58" r="1.15"/><circle cx="314.95" cy="393.58" r="1.15"/><circle cx="322.54" cy="393.58" r="1.15"/><circle cx="330.13" cy="393.58" r="1.15"/><circle cx="337.72" cy="393.58" r="1.15"/><circle cx="345.31" cy="393.58" r="1.15"/><circle cx="352.90" cy="390.93" r="1.15"/><circle cx="360.49" cy="390.93" r="1.15"/><circle cx="368.09" cy="390.93" r="1.15"/><circle cx="375.68" cy="390.93" r="1.15"/><circle cx="383.27" cy="390.93" r="1.15"/><circle cx="390.86" cy="390.93" r="1.15"/><circle cx="398.45" cy="390.93" r="1.15"/><circle cx="406.04" cy="390.93" r="1.15"/><circle cx="413.64" cy="390.93" r="1.15"/><circle cx="421.23" cy="390.93" r="1.15"/><circle cx="428.82" cy="390.93" r="1.15"/><circle cx="436.41" cy="390.93" r="1.15"/><circle cx="444.00" cy="390.93" r="1.15"/><circle cx="451.59" cy="390.93" r="1.15"/><circle cx="459.18" cy="390.93" r="1.15"/><circle cx="466.78" cy="390.93" r="1.15"/><circle cx="474.37" cy="390.93" r="1.15"/><circle cx="481.96" cy="390.93" r="1.15"/><circle cx="489.55" cy="390.93" r="1.15"/><circle cx="497.14" cy="390.93" r="1.15"/><circle cx="504.73" cy="390.93" r="1.15"/><circle cx="512.33" cy="388.27" r="1.15"/><circle cx="519.92" cy="388.27" r="1.15"/><circle cx="527.51" cy="390.93" r="1.15"/><circle cx="535.10" cy="390.93" r="1.15"/><circle cx="542.69" cy="390.93" r="1.15"/><circle cx="550.28" cy="390.93" r="1.15"/><circle cx="557.87" cy="390.93" r="1.15"/><circle cx="565.47" cy="390.93" r="1.15"/><circle cx="573.06" cy="390.93" r="1.15"/><circle cx="580.65" cy="390.93" r="1.15"/><circle cx="588.24" cy="390.93" r="1.15"/><circle cx="595.83" cy="390.93" r="1.15"/><circle cx="603.42" cy="390.93" r="1.15"/><circle cx="611.02" cy="388.27" r="1.15"/><circle cx="618.61" cy="388.27" r="1.15"/><circle cx="626.20" cy="390.93" r="1.15"/><circle cx="633.79" cy="388.27" r="1.15"/><circle cx="641.38" cy="388.27" r="1.15"/><circle cx="648.97" cy="388.27" r="1.15"/><circle cx="656.56" cy="388.27" r="1.15"/><circle cx="664.16" cy="388.27" r="1.15"/><circle cx="671.75" cy="388.27" r="1.15"/><circle cx="679.34" cy="388.27" r="1.15"/><circle cx="686.93" cy="385.62" r="1.15"/><circle cx="694.52" cy="388.27" r="1.15"/><circle cx="702.11" cy="390.93" r="1.15"/><circle cx="709.71" cy="390.93" r="1.15"/><circle cx="717.30" cy="388.27" r="1.15"/><circle cx="724.89" cy="390.93" r="1.15"/><circle cx="732.48" cy="388.27" r="1.15"/><circle cx="740.07" cy="388.27" r="1.15"/><circle cx="747.66" cy="388.27" r="1.15"/><circle cx="755.25" cy="388.27" r="1.15"/><circle cx="762.85" cy="388.27" r="1.15"/><circle cx="770.44" cy="388.27" r="1.15"/><circle cx="778.03" cy="388.27" r="1.15"/><circle cx="785.62" cy="388.27" r="1.15"/><circle cx="793.21" cy="388.27" r="1.15"/><circle cx="800.80" cy="385.62" r="1.15"/><circle cx="808.39" cy="385.62" r="1.15"/><circle cx="815.99" cy="385.62" r="1.15"/><circle cx="823.58" cy="385.62" r="1.15"/><circle cx="831.17" cy="385.62" r="1.15"/><circle cx="838.76" cy="385.62" r="1.15"/><circle cx="846.35" cy="385.62" r="1.15"/><circle cx="853.94" cy="385.62" r="1.15"/><circle cx="861.54" cy="385.62" r="1.15"/><circle cx="869.13" cy="385.62" r="1.15"/><circle cx="876.72" cy="385.62" r="1.15"/><circle cx="884.31" cy="385.62" r="1.15"/><circle cx="891.90" cy="385.62" r="1.15"/><circle cx="899.49" cy="385.62" r="1.15"/><circle cx="907.08" cy="385.62" r="1.15"/><circle cx="914.68" cy="385.62" r="1.15"/><circle cx="922.27" cy="382.97" r="1.15"/><circle cx="929.86" cy="382.97" r="1.15"/><circle cx="937.45" cy="382.97" r="1.15"/><circle cx="945.04" cy="385.62" r="1.15"/><circle cx="952.63" cy="382.97" r="1.15"/><circle cx="960.23" cy="382.97" r="1.15"/><circle cx="967.82" cy="382.97" r="1.15"/><circle cx="975.41" cy="382.97" r="1.15"/><circle cx="983.00" cy="382.97" r="1.15"/></g><g fill="#d52d4c"><polyline fill="none" stroke="#d52d4c" stroke-width="1.0" stroke-opacity="0.85" points="87.20,353.78 94.79,353.78 102.38,353.78 109.97,353.78 117.57,353.78 125.16,353.78 132.75,353.78 140.34,353.78 147.93,353.78 155.52,353.78 163.12,351.13 170.71,353.78 178.30,353.78 185.89,353.78 193.48,353.78 201.07,353.78 208.66,351.13 216.26,351.13 223.85,351.13 231.44,351.13 239.03,351.13 246.62,351.13 254.21,351.13 261.81,351.13 269.40,351.13 276.99,351.13 284.58,351.13 292.17,353.78 299.76,353.78 307.35,353.78 314.95,353.78 322.54,353.78 330.13,353.78 337.72,353.78 345.31,353.78 352.90,351.13 360.49,351.13 368.09,351.13 375.68,351.13 383.27,351.13 390.86,351.13 398.45,351.13 406.04,351.13 413.64,351.13 421.23,351.13 428.82,351.13 436.41,351.13 444.00,351.13 451.59,351.13 459.18,351.13 466.78,351.13 474.37,351.13 481.96,351.13 489.55,351.13 497.14,351.13 504.73,351.13 512.33,348.47 519.92,348.47 527.51,351.13 535.10,351.13 542.69,351.13 550.28,351.13 557.87,351.13 565.47,351.13 573.06,351.13 580.65,351.13 588.24,351.13 595.83,351.13 603.42,351.13 611.02,348.47 618.61,348.47 626.20,351.13 633.79,348.47 641.38,348.47 648.97,348.47 656.56,348.47 664.16,348.47 671.75,348.47 679.34,348.47 686.93,345.82 694.52,348.47 702.11,351.13 709.71,351.13 717.30,348.47 724.89,351.13 732.48,348.47 740.07,348.47 747.66,348.47 755.25,348.47 762.85,348.47 770.44,348.47 778.03,348.47 785.62,348.47 793.21,348.47 800.80,345.82 808.39,345.82 815.99,345.82 823.58,345.82 831.17,345.82 838.76,345.82 846.35,345.82 853.94,345.82 861.54,345.82 869.13,345.82 876.72,345.82 884.31,345.82 891.90,345.82 899.49,345.82 907.08,345.82 914.68,345.82 922.27,343.17 929.86,343.17 937.45,343.17 945.04,345.82 952.63,343.17 960.23,343.17 967.82,343.17 975.41,343.17 983.00,343.17"/><circle cx="87.20" cy="353.78" r="1.15"/><circle cx="94.79" cy="353.78" r="1.15"/><circle cx="102.38" cy="353.78" r="1.15"/><circle cx="109.97" cy="353.78" r="1.15"/><circle cx="117.57" cy="353.78" r="1.15"/><circle cx="125.16" cy="353.78" r="1.15"/><circle cx="132.75" cy="353.78" r="1.15"/><circle cx="140.34" cy="353.78" r="1.15"/><circle cx="147.93" cy="353.78" r="1.15"/><circle cx="155.52" cy="353.78" r="1.15"/><circle cx="163.12" cy="351.13" r="1.15"/><circle cx="170.71" cy="353.78" r="1.15"/><circle cx="178.30" cy="353.78" r="1.15"/><circle cx="185.89" cy="353.78" r="1.15"/><circle cx="193.48" cy="353.78" r="1.15"/><circle cx="201.07" cy="353.78" r="1.15"/><circle cx="208.66" cy="351.13" r="1.15"/><circle cx="216.26" cy="351.13" r="1.15"/><circle cx="223.85" cy="351.13" r="1.15"/><circle cx="231.44" cy="351.13" r="1.15"/><circle cx="239.03" cy="351.13" r="1.15"/><circle cx="246.62" cy="351.13" r="1.15"/><circle cx="254.21" cy="351.13" r="1.15"/><circle cx="261.81" cy="351.13" r="1.15"/><circle cx="269.40" cy="351.13" r="1.15"/><circle cx="276.99" cy="351.13" r="1.15"/><circle cx="284.58" cy="351.13" r="1.15"/><circle cx="292.17" cy="353.78" r="1.15"/><circle cx="299.76" cy="353.78" r="1.15"/><circle cx="307.35" cy="353.78" r="1.15"/><circle cx="314.95" cy="353.78" r="1.15"/><circle cx="322.54" cy="353.78" r="1.15"/><circle cx="330.13" cy="353.78" r="1.15"/><circle cx="337.72" cy="353.78" r="1.15"/><circle cx="345.31" cy="353.78" r="1.15"/><circle cx="352.90" cy="351.13" r="1.15"/><circle cx="360.49" cy="351.13" r="1.15"/><circle cx="368.09" cy="351.13" r="1.15"/><circle cx="375.68" cy="351.13" r="1.15"/><circle cx="383.27" cy="351.13" r="1.15"/><circle cx="390.86" cy="351.13" r="1.15"/><circle cx="398.45" cy="351.13" r="1.15"/><circle cx="406.04" cy="351.13" r="1.15"/><circle cx="413.64" cy="351.13" r="1.15"/><circle cx="421.23" cy="351.13" r="1.15"/><circle cx="428.82" cy="351.13" r="1.15"/><circle cx="436.41" cy="351.13" r="1.15"/><circle cx="444.00" cy="351.13" r="1.15"/><circle cx="451.59" cy="351.13" r="1.15"/><circle cx="459.18" cy="351.13" r="1.15"/><circle cx="466.78" cy="351.13" r="1.15"/><circle cx="474.37" cy="351.13" r="1.15"/><circle cx="481.96" cy="351.13" r="1.15"/><circle cx="489.55" cy="351.13" r="1.15"/><circle cx="497.14" cy="351.13" r="1.15"/><circle cx="504.73" cy="351.13" r="1.15"/><circle cx="512.33" cy="348.47" r="1.15"/><circle cx="519.92" cy="348.47" r="1.15"/><circle cx="527.51" cy="351.13" r="1.15"/><circle cx="535.10" cy="351.13" r="1.15"/><circle cx="542.69" cy="351.13" r="1.15"/><circle cx="550.28" cy="351.13" r="1.15"/><circle cx="557.87" cy="351.13" r="1.15"/><circle cx="565.47" cy="351.13" r="1.15"/><circle cx="573.06" cy="351.13" r="1.15"/><circle cx="580.65" cy="351.13" r="1.15"/><circle cx="588.24" cy="351.13" r="1.15"/><circle cx="595.83" cy="351.13" r="1.15"/><circle cx="603.42" cy="351.13" r="1.15"/><circle cx="611.02" cy="348.47" r="1.15"/><circle cx="618.61" cy="348.47" r="1.15"/><circle cx="626.20" cy="351.13" r="1.15"/><circle cx="633.79" cy="348.47" r="1.15"/><circle cx="641.38" cy="348.47" r="1.15"/><circle cx="648.97" cy="348.47" r="1.15"/><circle cx="656.56" cy="348.47" r="1.15"/><circle cx="664.16" cy="348.47" r="1.15"/><circle cx="671.75" cy="348.47" r="1.15"/><circle cx="679.34" cy="348.47" r="1.15"/><circle cx="686.93" cy="345.82" r="1.15"/><circle cx="694.52" cy="348.47" r="1.15"/><circle cx="702.11" cy="351.13" r="1.15"/><circle cx="709.71" cy="351.13" r="1.15"/><circle cx="717.30" cy="348.47" r="1.15"/><circle cx="724.89" cy="351.13" r="1.15"/><circle cx="732.48" cy="348.47" r="1.15"/><circle cx="740.07" cy="348.47" r="1.15"/><circle cx="747.66" cy="348.47" r="1.15"/><circle cx="755.25" cy="348.47" r="1.15"/><circle cx="762.85" cy="348.47" r="1.15"/><circle cx="770.44" cy="348.47" r="1.15"/><circle cx="778.03" cy="348.47" r="1.15"/><circle cx="785.62" cy="348.47" r="1.15"/><circle cx="793.21" cy="348.47" r="1.15"/><circle cx="800.80" cy="345.82" r="1.15"/><circle cx="808.39" cy="345.82" r="1.15"/><circle cx="815.99" cy="345.82" r="1.15"/><circle cx="823.58" cy="345.82" r="1.15"/><circle cx="831.17" cy="345.82" r="1.15"/><circle cx="838.76" cy="345.82" r="1.15"/><circle cx="846.35" cy="345.82" r="1.15"/><circle cx="853.94" cy="345.82" r="1.15"/><circle cx="861.54" cy="345.82" r="1.15"/><circle cx="869.13" cy="345.82" r="1.15"/><circle cx="876.72" cy="345.82" r="1.15"/><circle cx="884.31" cy="345.82" r="1.15"/><circle cx="891.90" cy="345.82" r="1.15"/><circle cx="899.49" cy="345.82" r="1.15"/><circle cx="907.08" cy="345.82" r="1.15"/><circle cx="914.68" cy="345.82" r="1.15"/><circle cx="922.27" cy="343.17" r="1.15"/><circle cx="929.86" cy="343.17" r="1.15"/><circle cx="937.45" cy="343.17" r="1.15"/><circle cx="945.04" cy="345.82" r="1.15"/><circle cx="952.63" cy="343.17" r="1.15"/><circle cx="960.23" cy="343.17" r="1.15"/><circle cx="967.82" cy="343.17" r="1.15"/><circle cx="975.41" cy="343.17" r="1.15"/><circle cx="983.00" cy="343.17" r="1.15"/></g><path d="M37,767 H17 V602 H937.5 V632" fill="none" stroke="#a51c62" stroke-width="4"/><line x1="395.5" x2="395.5" y1="602" y2="632" stroke="#a51c62" stroke-width="4"/><line x1="666.5" x2="666.5" y1="602" y2="632" stroke="#a51c62" stroke-width="4"/><line x1="937.5" x2="937.5" y1="602" y2="632" stroke="#a51c62" stroke-width="4"/><path d="M236,678 H255 V612 H949.5 V632" fill="none" stroke="#4f24b8" stroke-width="4"/><line x1="383.5" x2="383.5" y1="612" y2="632" stroke="#4f24b8" stroke-width="4"/><line x1="407.5" x2="407.5" y1="612" y2="632" stroke="#4f24b8" stroke-width="4"/><line x1="654.5" x2="654.5" y1="612" y2="632" stroke="#4f24b8" stroke-width="4"/><line x1="678.5" x2="678.5" y1="612" y2="632" stroke="#4f24b8" stroke-width="4"/><line x1="925.5" x2="925.5" y1="612" y2="632" stroke="#4f24b8" stroke-width="4"/><line x1="949.5" x2="949.5" y1="612" y2="632" stroke="#4f24b8" stroke-width="4"/></svg>
<div class="dot" style="left:418px;top:219px;background:#3a7bcf;"></div>
<div class="leg" style="left:437px;top:218px;">Ambient Air</div>
<div class="dot" style="left:515px;top:219px;background:#e59e38;"></div>
<div class="leg" style="left:534px;top:218px;">HE Inlet</div>
<div class="dot" style="left:593px;top:219px;background:#d52d4c;"></div>
<div class="leg" style="left:612px;top:218px;">HE Outlet</div>
<div class="dot" style="left:416px;top:467px;background:#6c757d;"></div>
<div class="leg" style="left:435px;top:466px;">% Uptime</div>
<div class="dot" style="left:503px;top:467px;background:#3a7bcf;"></div>
<div class="leg" style="left:522px;top:466px;">Board Max</div>
<div class="dot" style="left:596px;top:467px;background:#d52d4c;"></div>
<div class="leg" style="left:615px;top:466px;">Chip Max</div>
<div class="btn act" style="left:239px;">2 Hours</div>
<div class="btn" style="left:327px;">12 Hours</div>
<div class="btn" style="left:407.7px;">24 Hours</div>
<div class="btn" style="left:488.7px;">7 Days</div>
<div class="btn" style="left:555.4px;">30 Days</div>
<div class="btn" style="left:630.1px;">3 Months</div>
<div class="btn" style="left:713.3px;">6 Months</div>
<div class="btn" style="left:797.2px;">1 Year</div>
<div class="panel" style="left:37px;top:664px;width:199px;height:119px;border-radius:2px;box-sizing:border-box;border:1px solid #2a2d31;"></div>
<div class="abs" style="left:37px;top:715px;width:199px;text-align:center;font-size:14px;color:#e6e6e6;">Heat Exchanger</div>
<div class="badge" style="left:181px;top:668px;width:51px;background:#5226b5;">35.2<span class="d">°</span></div>
<div class="badge" style="left:41px;top:758px;width:51px;background:#701f93;">42.1<span class="d">°</span></div>
<div class="tank" style="left:272px;"></div>
<div class="dots" style="left:284px;width:73px;"></div>
<div class="dots" style="left:458px;width:73px;"></div>
<div class="hdr" style="left:378px;">TANK 1</div>
<div class="n" style="left:280px;top:643px;">1</div>
<div class="n" style="left:495px;top:643px;">2</div>
<div class="c" style="left:306px;top:642px;height:19px;background:#3eaaa0;"></div><div class="ct" style="left:306px;top:642.00px;">102<span class="s"> T</span></div>
<div class="c" style="left:352px;top:642px;height:19px;width:42px;background:#761f8e;"></div><div class="ct" style="left:352px;top:642.00px;">63<span class="d"> °</span></div>
<div class="c" style="left:398px;top:642px;height:19px;width:41px;background:#6a2196;"></div><div class="ct" style="left:398px;top:642.00px;">61<span class="d"> °</span></div>
<div class="c" style="left:443px;top:642px;height:19px;background:#3ca9a3;"></div><div class="ct" style="left:443px;top:642.00px;">101<span class="s"> T</span></div>
<div class="n" style="left:280px;top:667px;">3</div>
<div class="n" style="left:495px;top:667px;">4</div>
<div class="c" style="left:306px;top:665px;height:20px;background:#3a95d3;"></div><div class="ct" style="left:306px;top:665.00px;">78<span class="s"> T</span></div>
<div class="c" style="left:352px;top:665px;height:20px;width:42px;background:#7f1e87;"></div><div class="ct" style="left:352px;top:665.00px;">65<span class="d"> °</span></div>
<div class="c" style="left:398px;top:665px;height:20px;width:41px;background:#6a2196;"></div><div class="ct" style="left:398px;top:665.00px;">61<span class="d"> °</span></div>
<div class="c" style="left:443px;top:665px;height:20px;background:#3ba8a6;"></div><div class="ct" style="left:443px;top:665.00px;">100<span class="s"> T</span></div>
<div class="n" style="left:280px;top:690px;">5</div>
<div class="n" style="left:495px;top:690px;">6</div>
<div class="c" style="left:306px;top:689px;height:20px;background:#3eaaa0;"></div><div class="ct" style="left:306px;top:689.00px;">102<span class="s"> T</span></div>
<div class="c" style="left:352px;top:689px;height:20px;width:42px;background:#761f8e;"></div><div class="ct" style="left:352px;top:689.00px;">63<span class="d"> °</span></div>
<div class="c" style="left:398px;top:689px;height:20px;width:41px;background:#6e2093;"></div><div class="ct" style="left:398px;top:689.00px;">62<span class="d"> °</span></div>
<div class="c" style="left:443px;top:689px;height:20px;background:#43af94;"></div><div class="ct" style="left:443px;top:689.00px;">106<span class="s"> T</span></div>
<div class="n" style="left:280px;top:714px;">7</div>
<div class="n" style="left:495px;top:714px;">8</div>
<div class="c" style="left:306px;top:713px;height:19px;background:#3ca9a3;"></div><div class="ct" style="left:306px;top:713.00px;">101<span class="s"> T</span></div>
<div class="c" style="left:352px;top:713px;height:19px;width:42px;background:#761f8e;"></div><div class="ct" style="left:352px;top:713.00px;">63<span class="d"> °</span></div>
<div class="c" style="left:398px;top:713px;height:19px;width:41px;background:#6e2093;"></div><div class="ct" style="left:398px;top:713.00px;">62<span class="d"> °</span></div>
<div class="c" style="left:443px;top:713px;height:19px;background:#3ba8a6;"></div><div class="ct" style="left:443px;top:713.00px;">100<span class="s"> T</span></div>
<div class="n" style="left:280px;top:738px;">9</div>
<div class="n" style="left:495px;top:738px;">10</div>
<div class="c" style="left:306px;top:736px;height:20px;background:#3eaaa0;"></div><div class="ct" style="left:306px;top:736.00px;">102<span class="s"> T</span></div>
<div class="c" style="left:352px;top:736px;height:20px;width:42px;background:#761f8e;"></div><div class="ct" style="left:352px;top:736.00px;">63<span class="d"> °</span></div>
<div class="c" style="left:398px;top:736px;height:20px;width:41px;background:#732090;"></div><div class="ct" style="left:398px;top:736.00px;">63<span class="d"> °</span></div>
<div class="c" style="left:443px;top:736px;height:20px;background:#40ad9a;"></div><div class="ct" style="left:443px;top:736.00px;">104<span class="s"> T</span></div>
<div class="n" style="left:280px;top:762px;">11</div>
<div class="n" style="left:495px;top:762px;">12</div>
<div class="c" style="left:306px;top:760px;height:20px;background:#3eaaa0;"></div><div class="ct" style="left:306px;top:760.00px;">102<span class="s"> T</span></div>
<div class="c" style="left:352px;top:760px;height:20px;width:42px;background:#712091;"></div><div class="ct" style="left:352px;top:760.00px;">62<span class="d"> °</span></div>
<div class="c" style="left:398px;top:760px;height:20px;width:41px;background:#6e2093;"></div><div class="ct" style="left:398px;top:760.00px;">62<span class="d"> °</span></div>
<div class="c" style="left:443px;top:760px;height:20px;background:#3ca9a3;"></div><div class="ct" style="left:443px;top:760.00px;">101<span class="s"> T</span></div>
<div class="n" style="left:280px;top:786px;">13</div>
<div class="n" style="left:495px;top:786px;">14</div>
<div class="c" style="left:306px;top:784px;height:19px;background:#3eaaa0;"></div><div class="ct" style="left:306px;top:784.00px;">102<span class="s"> T</span></div>
<div class="c" style="left:352px;top:784px;height:19px;width:42px;background:#761f8e;"></div><div class="ct" style="left:352px;top:784.00px;">63<span class="d"> °</span></div>
<div class="c" style="left:398px;top:784px;height:19px;width:41px;background:#6e2093;"></div><div class="ct" style="left:398px;top:784.00px;">62<span class="d"> °</span></div>
<div class="c" style="left:443px;top:784px;height:19px;background:#3ca9a3;"></div><div class="ct" style="left:443px;top:784.00px;">101<span class="s"> T</span></div>
<div class="n" style="left:280px;top:809px;">15</div>
<div class="n" style="left:495px;top:809px;">16</div>
<div class="c" style="left:306px;top:807px;height:20px;background:#3eaaa0;"></div><div class="ct" style="left:306px;top:807.00px;">102<span class="s"> T</span></div>
<div class="c" style="left:352px;top:807px;height:20px;width:42px;background:#712091;"></div><div class="ct" style="left:352px;top:807.00px;">62<span class="d"> °</span></div>
<div class="c" style="left:398px;top:807px;height:20px;width:41px;background:#6e2093;"></div><div class="ct" style="left:398px;top:807.00px;">62<span class="d"> °</span></div>
<div class="c" style="left:443px;top:807px;height:20px;background:#3eaaa0;"></div><div class="ct" style="left:443px;top:807.00px;">102<span class="s"> T</span></div>
<div class="n" style="left:280px;top:833px;">17</div>
<div class="n" style="left:495px;top:833px;">18</div>
<div class="c" style="left:306px;top:831px;height:20px;background:#3ba7a8;"></div><div class="ct" style="left:306px;top:831.00px;">99<span class="s"> T</span></div>
<div class="c" style="left:352px;top:831px;height:20px;width:42px;background:#712091;"></div><div class="ct" style="left:352px;top:831.00px;">62<span class="d"> °</span></div>
<div class="c" style="left:398px;top:831px;height:20px;width:41px;background:#6e2093;"></div><div class="ct" style="left:398px;top:831.00px;">62<span class="d"> °</span></div>
<div class="c" style="left:443px;top:831px;height:20px;background:#3eaaa0;"></div><div class="ct" style="left:443px;top:831.00px;">102<span class="s"> T</span></div>
<div class="n" style="left:280px;top:857px;">19</div>
<div class="n" style="left:495px;top:857px;">20</div>
<div class="c" style="left:306px;top:855px;height:19px;background:#3eaaa0;"></div><div class="ct" style="left:306px;top:855.00px;">102<span class="s"> T</span></div>
<div class="c" style="left:352px;top:855px;height:19px;width:42px;background:#761f8e;"></div><div class="ct" style="left:352px;top:855.00px;">63<span class="d"> °</span></div>
<div class="c" style="left:398px;top:855px;height:19px;width:41px;background:#6e2093;"></div><div class="ct" style="left:398px;top:855.00px;">62<span class="d"> °</span></div>
<div class="c" style="left:443px;top:855px;height:19px;background:#3fac9d;"></div><div class="ct" style="left:443px;top:855.00px;">103<span class="s"> T</span></div>
<div class="n" style="left:280px;top:880px;">21</div>
<div class="n" style="left:495px;top:880px;">22</div>
<div class="c" style="left:306px;top:879px;height:19px;background:#3fac9d;"></div><div class="ct" style="left:306px;top:879.00px;">103<span class="s"> T</span></div>
<div class="c" style="left:352px;top:879px;height:19px;width:42px;background:#712091;"></div><div class="ct" style="left:352px;top:879.00px;">62<span class="d"> °</span></div>
<div class="c" style="left:398px;top:879px;height:19px;width:41px;background:#732090;"></div><div class="ct" style="left:398px;top:879.00px;">63<span class="d"> °</span></div>
<div class="c" style="left:443px;top:879px;height:19px;background:#3ca9a3;"></div><div class="ct" style="left:443px;top:879.00px;">101<span class="s"> T</span></div>
<div class="n" style="left:280px;top:904px;">23</div>
<div class="n" style="left:495px;top:904px;">24</div>
<div class="c" style="left:306px;top:902px;height:20px;background:#3eaaa0;"></div><div class="ct" style="left:306px;top:902.00px;">102<span class="s"> T</span></div>
<div class="c" style="left:352px;top:902px;height:20px;width:42px;background:#712091;"></div><div class="ct" style="left:352px;top:902.00px;">62<span class="d"> °</span></div>
<div class="c" style="left:398px;top:902px;height:20px;width:41px;background:#6e2093;"></div><div class="ct" style="left:398px;top:902.00px;">62<span class="d"> °</span></div>
<div class="c" style="left:443px;top:902px;height:20px;background:#3ca9a3;"></div><div class="ct" style="left:443px;top:902.00px;">101<span class="s"> T</span></div>
<div class="n" style="left:280px;top:928px;">25</div>
<div class="n" style="left:495px;top:928px;">26</div>
<div class="c" style="left:306px;top:926px;height:20px;background:#3fac9d;"></div><div class="ct" style="left:306px;top:926.00px;">103<span class="s"> T</span></div>
<div class="c" style="left:352px;top:926px;height:20px;width:42px;background:#712091;"></div><div class="ct" style="left:352px;top:926.00px;">62<span class="d"> °</span></div>
<div class="c" style="left:398px;top:926px;height:20px;width:41px;background:#732090;"></div><div class="ct" style="left:398px;top:926.00px;">63<span class="d"> °</span></div>
<div class="c" style="left:443px;top:926px;height:20px;background:#3ba8a6;"></div><div class="ct" style="left:443px;top:926.00px;">100<span class="s"> T</span></div>
<div class="tank" style="left:543px;"></div>
<div class="dots" style="left:555px;width:73px;"></div>
<div class="dots" style="left:729px;width:73px;"></div>
<div class="hdr" style="left:649px;">TANK 2</div>
<div class="n" style="left:551px;top:643px;">1</div>
<div class="n" style="left:766px;top:643px;">2</div>
<div class="c" style="left:577px;top:642px;height:19px;background:#3eaaa0;"></div><div class="ct" style="left:577px;top:642.00px;">102<span class="s"> T</span></div>
<div class="c" style="left:623px;top:642px;height:19px;width:42px;background:#761f8e;"></div><div class="ct" style="left:623px;top:642.00px;">63<span class="d"> °</span></div>
<div class="c" style="left:668px;top:642px;height:19px;width:41px;background:#6a2196;"></div><div class="ct" style="left:668px;top:642.00px;">61<span class="d"> °</span></div>
<div class="c" style="left:714px;top:642px;height:19px;background:#3ca9a3;"></div><div class="ct" style="left:714px;top:642.00px;">101<span class="s"> T</span></div>
<div class="n" style="left:551px;top:667px;">3</div>
<div class="n" style="left:766px;top:667px;">4</div>
<div class="c" style="left:577px;top:665px;height:20px;background:#3a95d3;"></div><div class="ct" style="left:577px;top:665.00px;">78<span class="s"> T</span></div>
<div class="c" style="left:623px;top:665px;height:20px;width:42px;background:#7f1e87;"></div><div class="ct" style="left:623px;top:665.00px;">65<span class="d"> °</span></div>
<div class="c" style="left:668px;top:665px;height:20px;width:41px;background:#6a2196;"></div><div class="ct" style="left:668px;top:665.00px;">61<span class="d"> °</span></div>
<div class="c" style="left:714px;top:665px;height:20px;background:#3ba8a6;"></div><div class="ct" style="left:714px;top:665.00px;">100<span class="s"> T</span></div>
<div class="n" style="left:551px;top:690px;">5</div>
<div class="n" style="left:766px;top:690px;">6</div>
<div class="c" style="left:577px;top:689px;height:20px;background:#3eaaa0;"></div><div class="ct" style="left:577px;top:689.00px;">102<span class="s"> T</span></div>
<div class="c" style="left:623px;top:689px;height:20px;width:42px;background:#761f8e;"></div><div class="ct" style="left:623px;top:689.00px;">63<span class="d"> °</span></div>
<div class="c" style="left:668px;top:689px;height:20px;width:41px;background:#6e2093;"></div><div class="ct" style="left:668px;top:689.00px;">62<span class="d"> °</span></div>
<div class="c" style="left:714px;top:689px;height:20px;background:#43af94;"></div><div class="ct" style="left:714px;top:689.00px;">106<span class="s"> T</span></div>
<div class="n" style="left:551px;top:714px;">7</div>
<div class="n" style="left:766px;top:714px;">8</div>
<div class="c" style="left:577px;top:713px;height:19px;background:#3ca9a3;"></div><div class="ct" style="left:577px;top:713.00px;">101<span class="s"> T</span></div>
<div class="c" style="left:623px;top:713px;height:19px;width:42px;background:#761f8e;"></div><div class="ct" style="left:623px;top:713.00px;">63<span class="d"> °</span></div>
<div class="c" style="left:668px;top:713px;height:19px;width:41px;background:#6e2093;"></div><div class="ct" style="left:668px;top:713.00px;">62<span class="d"> °</span></div>
<div class="c" style="left:714px;top:713px;height:19px;background:#3ba8a6;"></div><div class="ct" style="left:714px;top:713.00px;">100<span class="s"> T</span></div>
<div class="n" style="left:551px;top:738px;">9</div>
<div class="n" style="left:766px;top:738px;">10</div>
<div class="c" style="left:577px;top:736px;height:20px;background:#3eaaa0;"></div><div class="ct" style="left:577px;top:736.00px;">102<span class="s"> T</span></div>
<div class="c" style="left:623px;top:736px;height:20px;width:42px;background:#761f8e;"></div><div class="ct" style="left:623px;top:736.00px;">63<span class="d"> °</span></div>
<div class="c" style="left:668px;top:736px;height:20px;width:41px;background:#732090;"></div><div class="ct" style="left:668px;top:736.00px;">63<span class="d"> °</span></div>
<div class="c" style="left:714px;top:736px;height:20px;background:#40ad9a;"></div><div class="ct" style="left:714px;top:736.00px;">104<span class="s"> T</span></div>
<div class="n" style="left:551px;top:762px;">11</div>
<div class="n" style="left:766px;top:762px;">12</div>
<div class="c" style="left:577px;top:760px;height:20px;background:#3eaaa0;"></div><div class="ct" style="left:577px;top:760.00px;">102<span class="s"> T</span></div>
<div class="c" style="left:623px;top:760px;height:20px;width:42px;background:#712091;"></div><div class="ct" style="left:623px;top:760.00px;">62<span class="d"> °</span></div>
<div class="c" style="left:668px;top:760px;height:20px;width:41px;background:#6e2093;"></div><div class="ct" style="left:668px;top:760.00px;">62<span class="d"> °</span></div>
<div class="c" style="left:714px;top:760px;height:20px;background:#3ca9a3;"></div><div class="ct" style="left:714px;top:760.00px;">101<span class="s"> T</span></div>
<div class="n" style="left:551px;top:786px;">13</div>
<div class="n" style="left:766px;top:786px;">14</div>
<div class="c" style="left:577px;top:784px;height:19px;background:#3eaaa0;"></div><div class="ct" style="left:577px;top:784.00px;">102<span class="s"> T</span></div>
<div class="c" style="left:623px;top:784px;height:19px;width:42px;background:#761f8e;"></div><div class="ct" style="left:623px;top:784.00px;">63<span class="d"> °</span></div>
<div class="c" style="left:668px;top:784px;height:19px;width:41px;background:#6e2093;"></div><div class="ct" style="left:668px;top:784.00px;">62<span class="d"> °</span></div>
<div class="c" style="left:714px;top:784px;height:19px;background:#3ca9a3;"></div><div class="ct" style="left:714px;top:784.00px;">101<span class="s"> T</span></div>
<div class="n" style="left:551px;top:809px;">15</div>
<div class="n" style="left:766px;top:809px;">16</div>
<div class="c" style="left:577px;top:807px;height:20px;background:#3eaaa0;"></div><div class="ct" style="left:577px;top:807.00px;">102<span class="s"> T</span></div>
<div class="c" style="left:623px;top:807px;height:20px;width:42px;background:#712091;"></div><div class="ct" style="left:623px;top:807.00px;">62<span class="d"> °</span></div>
<div class="c" style="left:668px;top:807px;height:20px;width:41px;background:#6e2093;"></div><div class="ct" style="left:668px;top:807.00px;">62<span class="d"> °</span></div>
<div class="c" style="left:714px;top:807px;height:20px;background:#3eaaa0;"></div><div class="ct" style="left:714px;top:807.00px;">102<span class="s"> T</span></div>
<div class="n" style="left:551px;top:833px;">17</div>
<div class="n" style="left:766px;top:833px;">18</div>
<div class="c" style="left:577px;top:831px;height:20px;background:#3ba7a8;"></div><div class="ct" style="left:577px;top:831.00px;">99<span class="s"> T</span></div>
<div class="c" style="left:623px;top:831px;height:20px;width:42px;background:#712091;"></div><div class="ct" style="left:623px;top:831.00px;">62<span class="d"> °</span></div>
<div class="c" style="left:668px;top:831px;height:20px;width:41px;background:#6e2093;"></div><div class="ct" style="left:668px;top:831.00px;">62<span class="d"> °</span></div>
<div class="c" style="left:714px;top:831px;height:20px;background:#3eaaa0;"></div><div class="ct" style="left:714px;top:831.00px;">102<span class="s"> T</span></div>
<div class="n" style="left:551px;top:857px;">19</div>
<div class="n" style="left:766px;top:857px;">20</div>
<div class="c" style="left:577px;top:855px;height:19px;background:#3eaaa0;"></div><div class="ct" style="left:577px;top:855.00px;">102<span class="s"> T</span></div>
<div class="c" style="left:623px;top:855px;height:19px;width:42px;background:#761f8e;"></div><div class="ct" style="left:623px;top:855.00px;">63<span class="d"> °</span></div>
<div class="c" style="left:668px;top:855px;height:19px;width:41px;background:#6e2093;"></div><div class="ct" style="left:668px;top:855.00px;">62<span class="d"> °</span></div>
<div class="c" style="left:714px;top:855px;height:19px;background:#3fac9d;"></div><div class="ct" style="left:714px;top:855.00px;">103<span class="s"> T</span></div>
<div class="n" style="left:551px;top:880px;">21</div>
<div class="n" style="left:766px;top:880px;">22</div>
<div class="c" style="left:577px;top:879px;height:19px;background:#3fac9d;"></div><div class="ct" style="left:577px;top:879.00px;">103<span class="s"> T</span></div>
<div class="c" style="left:623px;top:879px;height:19px;width:42px;background:#712091;"></div><div class="ct" style="left:623px;top:879.00px;">62<span class="d"> °</span></div>
<div class="c" style="left:668px;top:879px;height:19px;width:41px;background:#732090;"></div><div class="ct" style="left:668px;top:879.00px;">63<span class="d"> °</span></div>
<div class="c" style="left:714px;top:879px;height:19px;background:#3ca9a3;"></div><div class="ct" style="left:714px;top:879.00px;">101<span class="s"> T</span></div>
<div class="n" style="left:551px;top:904px;">23</div>
<div class="n" style="left:766px;top:904px;">24</div>
<div class="c" style="left:577px;top:902px;height:20px;background:#3eaaa0;"></div><div class="ct" style="left:577px;top:902.00px;">102<span class="s"> T</span></div>
<div class="c" style="left:623px;top:902px;height:20px;width:42px;background:#712091;"></div><div class="ct" style="left:623px;top:902.00px;">62<span class="d"> °</span></div>
<div class="c" style="left:668px;top:902px;height:20px;width:41px;background:#6e2093;"></div><div class="ct" style="left:668px;top:902.00px;">62<span class="d"> °</span></div>
<div class="c" style="left:714px;top:902px;height:20px;background:#3ca9a3;"></div><div class="ct" style="left:714px;top:902.00px;">101<span class="s"> T</span></div>
<div class="n" style="left:551px;top:928px;">25</div>
<div class="n" style="left:766px;top:928px;">26</div>
<div class="c" style="left:577px;top:926px;height:20px;background:#3fac9d;"></div><div class="ct" style="left:577px;top:926.00px;">103<span class="s"> T</span></div>
<div class="c" style="left:623px;top:926px;height:20px;width:42px;background:#712091;"></div><div class="ct" style="left:623px;top:926.00px;">62<span class="d"> °</span></div>
<div class="c" style="left:668px;top:926px;height:20px;width:41px;background:#732090;"></div><div class="ct" style="left:668px;top:926.00px;">63<span class="d"> °</span></div>
<div class="c" style="left:714px;top:926px;height:20px;background:#3ba8a6;"></div><div class="ct" style="left:714px;top:926.00px;">100<span class="s"> T</span></div>
<div class="tank" style="left:814px;"></div>
<div class="dots" style="left:826px;width:73px;"></div>
<div class="dots" style="left:1000px;width:73px;"></div>
<div class="hdr" style="left:920px;">TANK 3</div>
<div class="n" style="left:822px;top:643px;">1</div>
<div class="n" style="left:1037px;top:643px;">2</div>
<div class="c" style="left:848px;top:642px;height:19px;background:#3eaaa0;"></div><div class="ct" style="left:848px;top:642.00px;">102<span class="s"> T</span></div>
<div class="c" style="left:894px;top:642px;height:19px;width:42px;background:#761f8e;"></div><div class="ct" style="left:894px;top:642.00px;">63<span class="d"> °</span></div>
<div class="c" style="left:939px;top:642px;height:19px;width:41px;background:#6a2196;"></div><div class="ct" style="left:939px;top:642.00px;">61<span class="d"> °</span></div>
<div class="c" style="left:985px;top:642px;height:19px;background:#3ca9a3;"></div><div class="ct" style="left:985px;top:642.00px;">101<span class="s"> T</span></div>
<div class="n" style="left:822px;top:667px;">3</div>
<div class="n" style="left:1037px;top:667px;">4</div>
<div class="c" style="left:848px;top:665px;height:20px;background:#3a95d3;"></div><div class="ct" style="left:848px;top:665.00px;">78<span class="s"> T</span></div>
<div class="c" style="left:894px;top:665px;height:20px;width:42px;background:#7f1e87;"></div><div class="ct" style="left:894px;top:665.00px;">65<span class="d"> °</span></div>
<div class="c" style="left:939px;top:665px;height:20px;width:41px;background:#6a2196;"></div><div class="ct" style="left:939px;top:665.00px;">61<span class="d"> °</span></div>
<div class="c" style="left:985px;top:665px;height:20px;background:#3ba8a6;"></div><div class="ct" style="left:985px;top:665.00px;">100<span class="s"> T</span></div>
<div class="n" style="left:822px;top:690px;">5</div>
<div class="n" style="left:1037px;top:690px;">6</div>
<div class="c" style="left:848px;top:689px;height:20px;background:#3eaaa0;"></div><div class="ct" style="left:848px;top:689.00px;">102<span class="s"> T</span></div>
<div class="c" style="left:894px;top:689px;height:20px;width:42px;background:#761f8e;"></div><div class="ct" style="left:894px;top:689.00px;">63<span class="d"> °</span></div>
<div class="c" style="left:939px;top:689px;height:20px;width:41px;background:#6e2093;"></div><div class="ct" style="left:939px;top:689.00px;">62<span class="d"> °</span></div>
<div class="c" style="left:985px;top:689px;height:20px;background:#43af94;"></div><div class="ct" style="left:985px;top:689.00px;">106<span class="s"> T</span></div>
<div class="n" style="left:822px;top:714px;">7</div>
<div class="n" style="left:1037px;top:714px;">8</div>
<div class="c" style="left:848px;top:713px;height:19px;background:#3ca9a3;"></div><div class="ct" style="left:848px;top:713.00px;">101<span class="s"> T</span></div>
<div class="c" style="left:894px;top:713px;height:19px;width:42px;background:#761f8e;"></div><div class="ct" style="left:894px;top:713.00px;">63<span class="d"> °</span></div>
<div class="c" style="left:939px;top:713px;height:19px;width:41px;background:#6e2093;"></div><div class="ct" style="left:939px;top:713.00px;">62<span class="d"> °</span></div>
<div class="c" style="left:985px;top:713px;height:19px;background:#3ba8a6;"></div><div class="ct" style="left:985px;top:713.00px;">100<span class="s"> T</span></div>
<div class="n" style="left:822px;top:738px;">9</div>
<div class="n" style="left:1037px;top:738px;">10</div>
<div class="c" style="left:848px;top:736px;height:20px;background:#3eaaa0;"></div><div class="ct" style="left:848px;top:736.00px;">102<span class="s"> T</span></div>
<div class="c" style="left:894px;top:736px;height:20px;width:42px;background:#761f8e;"></div><div class="ct" style="left:894px;top:736.00px;">63<span class="d"> °</span></div>
<div class="c" style="left:939px;top:736px;height:20px;width:41px;background:#732090;"></div><div class="ct" style="left:939px;top:736.00px;">63<span class="d"> °</span></div>
<div class="c" style="left:985px;top:736px;height:20px;background:#40ad9a;"></div><div class="ct" style="left:985px;top:736.00px;">104<span class="s"> T</span></div>
<div class="n" style="left:822px;top:762px;">11</div>
<div class="n" style="left:1037px;top:762px;">12</div>
<div class="c" style="left:848px;top:760px;height:20px;background:#3eaaa0;"></div><div class="ct" style="left:848px;top:760.00px;">102<span class="s"> T</span></div>
<div class="c" style="left:894px;top:760px;height:20px;width:42px;background:#712091;"></div><div class="ct" style="left:894px;top:760.00px;">62<span class="d"> °</span></div>
<div class="c" style="left:939px;top:760px;height:20px;width:41px;background:#6e2093;"></div><div class="ct" style="left:939px;top:760.00px;">62<span class="d"> °</span></div>
<div class="c" style="left:985px;top:760px;height:20px;background:#3ca9a3;"></div><div class="ct" style="left:985px;top:760.00px;">101<span class="s"> T</span></div>
<div class="n" style="left:822px;top:786px;">13</div>
<div class="n" style="left:1037px;top:786px;">14</div>
<div class="c" style="left:848px;top:784px;height:19px;background:#3eaaa0;"></div><div class="ct" style="left:848px;top:784.00px;">102<span class="s"> T</span></div>
<div class="c" style="left:894px;top:784px;height:19px;width:42px;background:#761f8e;"></div><div class="ct" style="left:894px;top:784.00px;">63<span class="d"> °</span></div>
<div class="c" style="left:939px;top:784px;height:19px;width:41px;background:#6e2093;"></div><div class="ct" style="left:939px;top:784.00px;">62<span class="d"> °</span></div>
<div class="c" style="left:985px;top:784px;height:19px;background:#3ca9a3;"></div><div class="ct" style="left:985px;top:784.00px;">101<span class="s"> T</span></div>
<div class="n" style="left:822px;top:809px;">15</div>
<div class="n" style="left:1037px;top:809px;">16</div>
<div class="c" style="left:848px;top:807px;height:20px;background:#3eaaa0;"></div><div class="ct" style="left:848px;top:807.00px;">102<span class="s"> T</span></div>
<div class="c" style="left:894px;top:807px;height:20px;width:42px;background:#712091;"></div><div class="ct" style="left:894px;top:807.00px;">62<span class="d"> °</span></div>
<div class="c" style="left:939px;top:807px;height:20px;width:41px;background:#6e2093;"></div><div class="ct" style="left:939px;top:807.00px;">62<span class="d"> °</span></div>
<div class="c" style="left:985px;top:807px;height:20px;background:#3eaaa0;"></div><div class="ct" style="left:985px;top:807.00px;">102<span class="s"> T</span></div>
<div class="n" style="left:822px;top:833px;">17</div>
<div class="n" style="left:1037px;top:833px;">18</div>
<div class="c" style="left:848px;top:831px;height:20px;background:#3ba7a8;"></div><div class="ct" style="left:848px;top:831.00px;">99<span class="s"> T</span></div>
<div class="c" style="left:894px;top:831px;height:20px;width:42px;background:#712091;"></div><div class="ct" style="left:894px;top:831.00px;">62<span class="d"> °</span></div>
<div class="c" style="left:939px;top:831px;height:20px;width:41px;background:#6e2093;"></div><div class="ct" style="left:939px;top:831.00px;">62<span class="d"> °</span></div>
<div class="c" style="left:985px;top:831px;height:20px;background:#3eaaa0;"></div><div class="ct" style="left:985px;top:831.00px;">102<span class="s"> T</span></div>
<div class="n" style="left:822px;top:857px;">19</div>
<div class="n" style="left:1037px;top:857px;">20</div>
<div class="c" style="left:848px;top:855px;height:19px;background:#3eaaa0;"></div><div class="ct" style="left:848px;top:855.00px;">102<span class="s"> T</span></div>
<div class="c" style="left:894px;top:855px;height:19px;width:42px;background:#761f8e;"></div><div class="ct" style="left:894px;top:855.00px;">63<span class="d"> °</span></div>
<div class="c" style="left:939px;top:855px;height:19px;width:41px;background:#6e2093;"></div><div class="ct" style="left:939px;top:855.00px;">62<span class="d"> °</span></div>
<div class="c" style="left:985px;top:855px;height:19px;background:#3fac9d;"></div><div class="ct" style="left:985px;top:855.00px;">103<span class="s"> T</span></div>
<div class="n" style="left:822px;top:880px;">21</div>
<div class="n" style="left:1037px;top:880px;">22</div>
<div class="c" style="left:848px;top:879px;height:19px;background:#3fac9d;"></div><div class="ct" style="left:848px;top:879.00px;">103<span class="s"> T</span></div>
<div class="c" style="left:894px;top:879px;height:19px;width:42px;background:#712091;"></div><div class="ct" style="left:894px;top:879.00px;">62<span class="d"> °</span></div>
<div class="c" style="left:939px;top:879px;height:19px;width:41px;background:#732090;"></div><div class="ct" style="left:939px;top:879.00px;">63<span class="d"> °</span></div>
<div class="c" style="left:985px;top:879px;height:19px;background:#3ca9a3;"></div><div class="ct" style="left:985px;top:879.00px;">101<span class="s"> T</span></div>
<div class="n" style="left:822px;top:904px;">23</div>
<div class="n" style="left:1037px;top:904px;">24</div>
<div class="c" style="left:848px;top:902px;height:20px;background:#3eaaa0;"></div><div class="ct" style="left:848px;top:902.00px;">102<span class="s"> T</span></div>
<div class="c" style="left:894px;top:902px;height:20px;width:42px;background:#712091;"></div><div class="ct" style="left:894px;top:902.00px;">62<span class="d"> °</span></div>
<div class="c" style="left:939px;top:902px;height:20px;width:41px;background:#6e2093;"></div><div class="ct" style="left:939px;top:902.00px;">62<span class="d"> °</span></div>
<div class="c" style="left:985px;top:902px;height:20px;background:#3ca9a3;"></div><div class="ct" style="left:985px;top:902.00px;">101<span class="s"> T</span></div>
<div class="n" style="left:822px;top:928px;">25</div>
<div class="n" style="left:1037px;top:928px;">26</div>
<div class="c" style="left:848px;top:926px;height:20px;background:#3fac9d;"></div><div class="ct" style="left:848px;top:926.00px;">103<span class="s"> T</span></div>
<div class="c" style="left:894px;top:926px;height:20px;width:42px;background:#712091;"></div><div class="ct" style="left:894px;top:926.00px;">62<span class="d"> °</span></div>
<div class="c" style="left:939px;top:926px;height:20px;width:41px;background:#732090;"></div><div class="ct" style="left:939px;top:926.00px;">63<span class="d"> °</span></div>
<div class="c" style="left:985px;top:926px;height:20px;background:#3ba8a6;"></div><div class="ct" style="left:985px;top:926.00px;">100<span class="s"> T</span></div>
<div class="abs" style="left:1px;top:970px;width:1086px;height:1px;background:#4b4f55;border-top-left-radius:2px;"></div><div class="abs" style="left:2px;top:971px;width:1085px;height:1px;background:#0f1820;"></div>
</body></html>
